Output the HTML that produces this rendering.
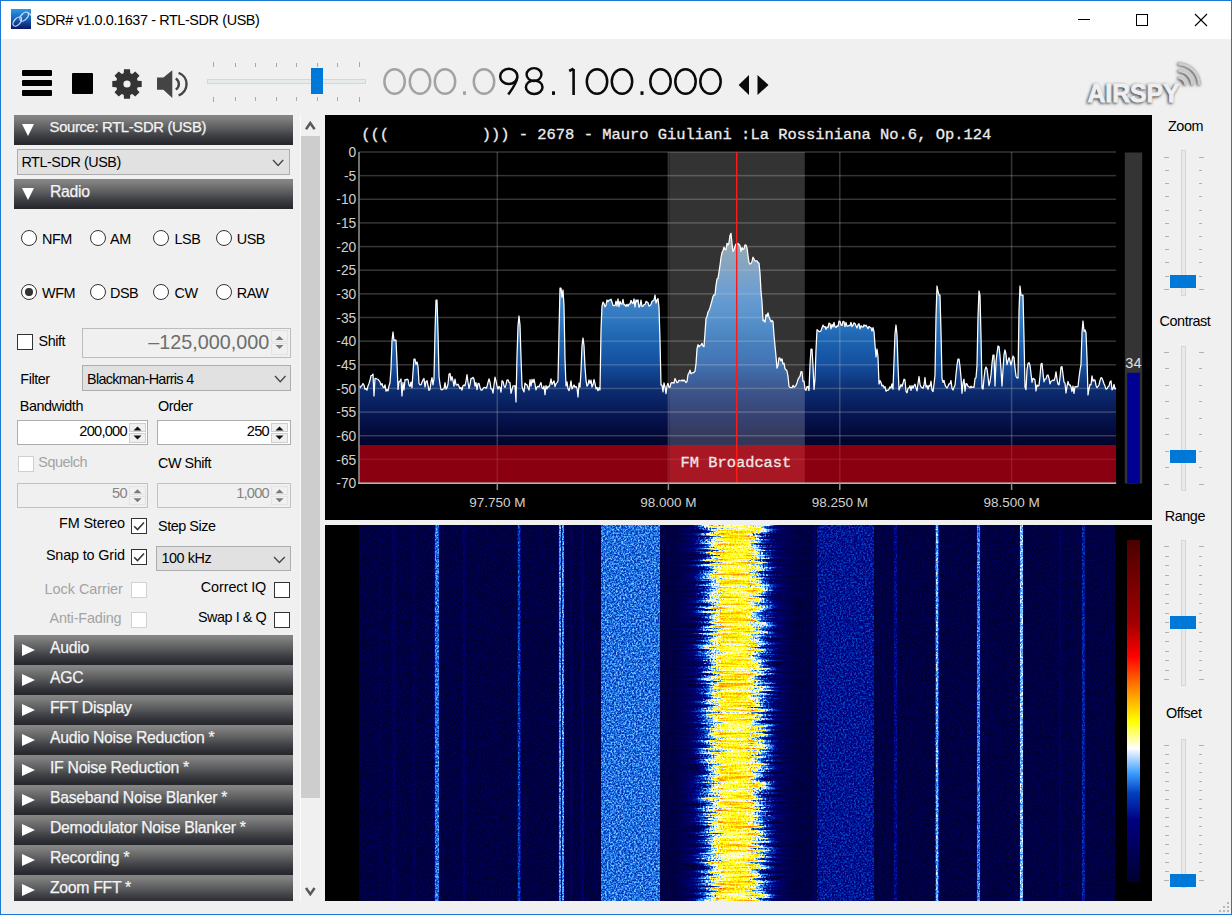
<!DOCTYPE html>
<html><head><meta charset="utf-8"><title>SDR#</title>
<style>
*{box-sizing:border-box;margin:0;padding:0}
html,body{width:1232px;height:915px;overflow:hidden;background:#f0f0f0;font-family:"Liberation Sans",sans-serif;color:#000}
.a{position:absolute}
.t{position:absolute;white-space:pre;font-size:13.7px;line-height:1;color:#000}
.hdr{position:absolute;left:14px;width:279px;height:30px;background:linear-gradient(#868686 0%,#7f7f7f 12%,#6b6b6c 30%,#57585b 48%,#45474b 62%,#35373c 78%,#2b2d32 90%,#252628 100%)}
.hdr .tx{position:absolute;left:36px;top:4.5px;font-size:15.8px;letter-spacing:-0.3px;line-height:1;color:#f4f4f4;white-space:pre;-webkit-text-stroke:0.25px #f4f4f4}
.tri-d{position:absolute;left:8px;top:9px;width:0;height:0;border-left:6.5px solid transparent;border-right:6.5px solid transparent;border-top:12px solid #fff}
.tri-r{position:absolute;left:8px;top:9px;width:0;height:0;border-top:6.5px solid transparent;border-bottom:6.5px solid transparent;border-left:13px solid #fff}
.radio{position:absolute;width:16px;height:16px;border-radius:50%;border:1.6px solid #333;background:#fff}
.chk{position:absolute;width:16px;height:16px;border:1.6px solid #333;background:#fff}
.chk.dis{border-color:#ccc}
.box{position:absolute;border:1px solid #adadad;background:#fff}
.combo{position:absolute;border:1px solid #adadad;background:#e1e1e1}
.spin{position:absolute;width:17px;background:#f0f0f0;border:1px solid #d6d6d6}
.dis{color:#a0a0a0}
</style></head><body>

<div class="a" style="left:0;top:0;width:1232px;height:915px;border:1px solid #1a7ad3"></div>
<div class="a" style="left:1px;top:1px;width:1230px;height:38px;background:#fff"></div>
<svg class="a" style="left:11px;top:9px" width="20" height="20" viewBox="0 0 20 20">
<defs><linearGradient id="ig" x1="0" y1="0" x2="0" y2="1"><stop offset="0" stop-color="#2a9ae8"/><stop offset="0.5" stop-color="#1560b8"/><stop offset="1" stop-color="#0a1565"/></linearGradient></defs>
<rect width="20" height="20" fill="url(#ig)"/>
<g fill="none" stroke="#e6eeff" stroke-width="1.3" opacity="0.85"><ellipse cx="6.3" cy="12.6" rx="5.4" ry="3.1" transform="rotate(-48 6.3 12.6)"/><ellipse cx="13.2" cy="7.6" rx="5.4" ry="3.1" transform="rotate(-48 13.2 7.6)"/><path d="M17 4.2 C18.5 4.5 19.5 5.5 20 6.5"/></g>
</svg>
<div class="t" style="left:36px;top:12.7px;font-size:14.4px;letter-spacing:-0.38px">SDR# v1.0.0.1637 - RTL-SDR (USB)</div>
<div class="a" style="left:1078px;top:19px;width:12px;height:1px;background:#000"></div>
<div class="a" style="left:1136px;top:14px;width:12px;height:12px;border:1px solid #000"></div>
<svg class="a" style="left:1194px;top:13px" width="14" height="14" viewBox="0 0 14 14"><path d="M1 1L13 13M13 1L1 13" stroke="#000" stroke-width="1.1"/></svg>
<div class="a" style="left:22px;top:70px;width:30px;height:6px;background:#000;border-radius:1px"></div>
<div class="a" style="left:22px;top:80px;width:30px;height:6px;background:#000;border-radius:1px"></div>
<div class="a" style="left:22px;top:90px;width:30px;height:6px;background:#000;border-radius:1px"></div>
<div class="a" style="left:72px;top:73px;width:21px;height:21px;background:#000;border-radius:1px"></div>
<svg class="a" style="left:0;top:0" width="200" height="110" viewBox="0 0 200 110">
<path d="M137.70,80.69 L141.70,81.02 L141.70,86.98 L137.70,87.31 L136.91,89.23 L139.50,92.29 L135.29,96.50 L132.23,93.91 L130.31,94.70 L129.98,98.70 L124.02,98.70 L123.69,94.70 L121.77,93.91 L118.71,96.50 L114.50,92.29 L117.09,89.23 L116.30,87.31 L112.30,86.98 L112.30,81.02 L116.30,80.69 L117.09,78.77 L114.50,75.71 L118.71,71.50 L121.77,74.09 L123.69,73.30 L124.02,69.30 L129.98,69.30 L130.31,73.30 L132.23,74.09 L135.29,71.50 L139.50,75.71 L136.91,78.77 Z M130.6,84 A3.6 3.6 0 1 0 123.4,84 A3.6 3.6 0 1 0 130.6,84 Z" fill="#333" fill-rule="evenodd"/>
<path d="M157 77.6 H163.4 L172.3 70.3 V97.9 L163.4 89.8 H157 Z" fill="#444"/>
<path d="M175.8 78.6 A6.5 6.5 0 0 1 175.8 89.6" fill="none" stroke="#444" stroke-width="2.4"/>
<path d="M178.6 72.8 A12 12 0 0 1 178.6 95.4" fill="none" stroke="#444" stroke-width="2.4"/>
</svg>
<div class="a" style="left:207px;top:79px;width:159px;height:5px;background:#e7eaea;border:1px solid #d6d6d6"></div>
<div class="a" style="left:213.4px;top:61.5px;width:1px;height:5px;background:#a8a8a8"></div>
<div class="a" style="left:213.4px;top:97px;width:1px;height:5px;background:#a8a8a8"></div>
<div class="a" style="left:234.5px;top:63px;width:1px;height:3.5px;background:#a8a8a8"></div>
<div class="a" style="left:234.5px;top:97px;width:1px;height:3.5px;background:#a8a8a8"></div>
<div class="a" style="left:254.7px;top:63px;width:1px;height:3.5px;background:#a8a8a8"></div>
<div class="a" style="left:254.7px;top:97px;width:1px;height:3.5px;background:#a8a8a8"></div>
<div class="a" style="left:275.8px;top:63px;width:1px;height:3.5px;background:#a8a8a8"></div>
<div class="a" style="left:275.8px;top:97px;width:1px;height:3.5px;background:#a8a8a8"></div>
<div class="a" style="left:295.9px;top:63px;width:1px;height:3.5px;background:#a8a8a8"></div>
<div class="a" style="left:295.9px;top:97px;width:1px;height:3.5px;background:#a8a8a8"></div>
<div class="a" style="left:317.3px;top:63px;width:1px;height:3.5px;background:#a8a8a8"></div>
<div class="a" style="left:317.3px;top:97px;width:1px;height:3.5px;background:#a8a8a8"></div>
<div class="a" style="left:337.1px;top:63px;width:1px;height:3.5px;background:#a8a8a8"></div>
<div class="a" style="left:337.1px;top:97px;width:1px;height:3.5px;background:#a8a8a8"></div>
<div class="a" style="left:358.8px;top:61.5px;width:1px;height:5px;background:#a8a8a8"></div>
<div class="a" style="left:358.8px;top:97px;width:1px;height:5px;background:#a8a8a8"></div>
<div class="a" style="left:311px;top:68px;width:12px;height:26px;background:#0078d7"></div>
<svg class="a" style="left:0;top:0" width="800" height="110" viewBox="0 0 800 110"><ellipse cx="394.6" cy="81.5" rx="10.2" ry="12.3" fill="none" stroke="#a3a3a3" stroke-width="2.5"/><ellipse cx="420" cy="81.5" rx="10.2" ry="12.3" fill="none" stroke="#a3a3a3" stroke-width="2.5"/><ellipse cx="445" cy="81.5" rx="10.2" ry="12.3" fill="none" stroke="#a3a3a3" stroke-width="2.5"/><rect x="463" y="91.3" width="3" height="3.6" fill="#a3a3a3"/><ellipse cx="484" cy="81.5" rx="10.2" ry="12.3" fill="none" stroke="#a3a3a3" stroke-width="2.5"/><ellipse cx="508.8" cy="76.4" rx="8.6" ry="7.6" fill="none" stroke="#0a0a0a" stroke-width="2.5"/><path d="M517.2 77.5 C516.8 83, 513 88, 508.3 94.5" fill="none" stroke="#0a0a0a" stroke-width="2.5"/><ellipse cx="534" cy="74.6" rx="7.4" ry="6.5" fill="none" stroke="#0a0a0a" stroke-width="2.4"/><ellipse cx="534.2" cy="87.2" rx="8.3" ry="6.8" fill="none" stroke="#0a0a0a" stroke-width="2.5"/><rect x="552" y="91.3" width="3" height="3.6" fill="#0a0a0a"/><path d="M573.6 69 V95.1 M569.2 71 L573.6 68.6" fill="none" stroke="#0a0a0a" stroke-width="2.6"/><ellipse cx="597" cy="81.5" rx="10.2" ry="12.3" fill="none" stroke="#0a0a0a" stroke-width="2.5"/><ellipse cx="622" cy="81.5" rx="10.2" ry="12.3" fill="none" stroke="#0a0a0a" stroke-width="2.5"/><rect x="640.5" y="91.3" width="3" height="3.6" fill="#0a0a0a"/><ellipse cx="660.5" cy="81.5" rx="10.2" ry="12.3" fill="none" stroke="#0a0a0a" stroke-width="2.5"/><ellipse cx="685.5" cy="81.5" rx="10.2" ry="12.3" fill="none" stroke="#0a0a0a" stroke-width="2.5"/><ellipse cx="710.5" cy="81.5" rx="10.2" ry="12.3" fill="none" stroke="#0a0a0a" stroke-width="2.5"/><path d="M749 75 V95 L738.6 85 Z" fill="#0a0a0a"/><path d="M757.5 75 V95 L768.5 85 Z" fill="#0a0a0a"/></svg>
<svg class="a" style="left:1070px;top:50px" width="150" height="65" viewBox="1070 50 150 65">
<defs><filter id="ash" x="1070" y="50" width="150" height="65" filterUnits="userSpaceOnUse"><feGaussianBlur stdDeviation="1.6"/></filter></defs>
<g filter="url(#ash)" fill="#3a3a3a" stroke="#3a3a3a">
<text x="1086.5" y="103" font-family="Liberation Sans" font-weight="700" font-size="26.5" stroke-width="1.2" textLength="92" lengthAdjust="spacingAndGlyphs">AIRSPY</text>
<path d="M1177.4 78.5 A7 7 0 0 1 1184.4 85.5 M1177.4 71.5 A14 14 0 0 1 1191.4 85.5 M1177.4 64.5 A21 21 0 0 1 1198.4 85.5" fill="none" stroke-width="3.2"/>
</g>
<text x="1087.5" y="101.6" font-family="Liberation Sans" font-weight="700" font-size="26.5" fill="#efefef" stroke="#efefef" stroke-width="0.9" textLength="92" lengthAdjust="spacingAndGlyphs">AIRSPY</text>
<path d="M1178.4 77.5 A7.3 7.3 0 0 1 1185.7 84.8 M1178.4 70.8 A14 14 0 0 1 1192.4 84.8 M1178.4 64 A20.8 20.8 0 0 1 1199.2 84.8" fill="none" stroke="#cdcdcd" stroke-width="2.8"/>
</svg>
<div class="a" style="left:0;top:0;width:300px;height:901px;overflow:hidden">
<div class="hdr" style="top:115px"><div class="tri-d" style="top:8.5px"></div><div class="tx" style="left:35.6px;top:5px;font-size:14.8px;letter-spacing:-0.33px">Source: RTL-SDR (USB)</div></div>
<div class="combo" style="left:17px;top:149px;width:273px;height:26px"></div>
<div class="t" style="left:21.4px;top:155.21px;font-size:14.4px;color:#000;letter-spacing:-0.45px;">RTL-SDR (USB)</div>
<svg class="a" style="left:271.3px;top:157.5px" width="14.199999999999989" height="9.5" viewBox="271.3 157.5 14.199999999999989 9.5"><path d="M273.3 159.5 L278.4 165 L283.5 159.5" fill="none" stroke="#444" stroke-width="1.3"/></svg>
<div class="hdr" style="top:179px"><div class="tri-d" style="top:8.5px"></div><div class="tx" style="top:4.5px">Radio</div></div>
<div class="radio" style="left:21px;top:230.3px"></div>
<div class="t" style="left:42.0px;top:232.01px;font-size:14.4px;color:#000;letter-spacing:-0.45px;">NFM</div>
<div class="radio" style="left:90px;top:230.3px"></div>
<div class="t" style="left:110.0px;top:232.01px;font-size:14.4px;color:#000;letter-spacing:-0.45px;">AM</div>
<div class="radio" style="left:153.4px;top:230.3px"></div>
<div class="t" style="left:174.5px;top:232.01px;font-size:14.4px;color:#000;letter-spacing:-0.45px;">LSB</div>
<div class="radio" style="left:216px;top:230.3px"></div>
<div class="t" style="left:236.7px;top:232.01px;font-size:14.4px;color:#000;letter-spacing:-0.45px;">USB</div>
<div class="radio" style="left:21px;top:284px"></div>
<div class="a" style="left:25.3px;top:288.3px;width:7.4px;height:7.4px;border-radius:50%;background:#333"></div>
<div class="t" style="left:42.0px;top:285.81px;font-size:14.4px;color:#000;letter-spacing:-0.45px;">WFM</div>
<div class="radio" style="left:90px;top:284px"></div>
<div class="t" style="left:110.0px;top:285.81px;font-size:14.4px;color:#000;letter-spacing:-0.45px;">DSB</div>
<div class="radio" style="left:153.4px;top:284px"></div>
<div class="t" style="left:174.5px;top:285.81px;font-size:14.4px;color:#000;letter-spacing:-0.45px;">CW</div>
<div class="radio" style="left:216px;top:284px"></div>
<div class="t" style="left:236.7px;top:285.81px;font-size:14.4px;color:#000;letter-spacing:-0.45px;">RAW</div>
<div class="chk" style="left:17px;top:334px"></div>
<div class="t" style="left:38.5px;top:334.21px;font-size:14.4px;color:#000;letter-spacing:-0.45px;">Shift</div>
<div class="box" style="left:82px;top:328px;width:209px;height:30px;background:#f0f0f0;border-color:#bcbcbc"></div>
<div class="a" style="left:271px;top:330px;width:17px;height:12.0px;background:#f0f0f0;border:1px solid #e3e3e3"></div><div class="a" style="left:271px;top:343.0px;width:17px;height:12.0px;background:#f0f0f0;border:1px solid #e3e3e3"></div><svg class="a" style="left:271px;top:330px" width="17" height="25" viewBox="271 330 17 25"><path d="M275.5 340.0 L279.5 336.0 L283.5 340.0 Z M275.5 345.0 L279.5 349.0 L283.5 345.0 Z" fill="#7a7a7a"/></svg>
<div class="t" style="right:30.8px;top:332.64px;font-size:19.8px;color:#6d6d6d;text-align:right;">&#8211;125,000,000</div>
<div class="t" style="left:20.3px;top:371.71px;font-size:14.4px;color:#000;letter-spacing:-0.45px;">Filter</div>
<div class="combo" style="left:82px;top:365px;width:209px;height:26px"></div>
<div class="t" style="left:87.0px;top:371.71px;font-size:14.4px;color:#000;letter-spacing:-0.45px;letter-spacing:-0.7px">Blackman-Harris 4</div>
<svg class="a" style="left:272.5px;top:373.8px" width="14.5" height="9.800000000000011" viewBox="272.5 373.8 14.5 9.800000000000011"><path d="M274.5 375.8 L279.75 381.6 L285 375.8" fill="none" stroke="#444" stroke-width="1.3"/></svg>
<div class="t" style="left:19.8px;top:399.21px;font-size:14.4px;color:#000;letter-spacing:-0.45px;">Bandwidth</div>
<div class="t" style="left:158.0px;top:399.21px;font-size:14.4px;color:#000;letter-spacing:-0.45px;">Order</div>
<div class="box" style="left:17px;top:420px;width:131px;height:25px"></div>
<div class="a" style="left:128.7px;top:422.5px;width:17px;height:9.5px;background:#f0f0f0;border:1px solid #cfcfcf"></div><div class="a" style="left:128.7px;top:433.0px;width:17px;height:9.5px;background:#f0f0f0;border:1px solid #cfcfcf"></div><svg class="a" style="left:128.7px;top:422.5px" width="17" height="20.0" viewBox="128.7 422.5 17 20.0"><path d="M133.2 430.0 L137.2 426.0 L141.2 430.0 Z M133.2 435.0 L137.2 439.0 L141.2 435.0 Z" fill="#111"/></svg>
<div class="t" style="right:173.2px;top:424.44px;font-size:14.6px;color:#000;text-align:right;letter-spacing:-0.75px;">200,000</div>
<div class="box" style="left:156.5px;top:420px;width:134px;height:25px"></div>
<div class="a" style="left:271.3px;top:422.5px;width:17px;height:9.5px;background:#f0f0f0;border:1px solid #cfcfcf"></div><div class="a" style="left:271.3px;top:433.0px;width:17px;height:9.5px;background:#f0f0f0;border:1px solid #cfcfcf"></div><svg class="a" style="left:271.3px;top:422.5px" width="17" height="20.0" viewBox="271.3 422.5 17 20.0"><path d="M275.8 430.0 L279.8 426.0 L283.8 430.0 Z M275.8 435.0 L279.8 439.0 L283.8 435.0 Z" fill="#111"/></svg>
<div class="t" style="right:31.1px;top:424.44px;font-size:14.6px;color:#000;text-align:right;letter-spacing:-0.75px;">250</div>
<div class="chk dis" style="left:17.5px;top:455.5px;border-color:#cfcfcf"></div>
<div class="t" style="left:38.3px;top:454.91px;font-size:14.4px;color:#a3a3a3;letter-spacing:-0.45px;">Squelch</div>
<div class="t" style="left:158.0px;top:456.21px;font-size:14.4px;color:#000;letter-spacing:-0.45px;">CW Shift</div>
<div class="box" style="left:17px;top:483px;width:131px;height:24.5px;background:#f0f0f0;border-color:#c2c2c2"></div>
<div class="a" style="left:128.7px;top:485.5px;width:17px;height:9.2px;background:#f0f0f0;border:1px solid #e3e3e3"></div><div class="a" style="left:128.7px;top:495.8px;width:17px;height:9.2px;background:#f0f0f0;border:1px solid #e3e3e3"></div><svg class="a" style="left:128.7px;top:485.5px" width="17" height="19.5" viewBox="128.7 485.5 17 19.5"><path d="M133.2 492.75 L137.2 488.75 L141.2 492.75 Z M133.2 497.75 L137.2 501.75 L141.2 497.75 Z" fill="#7a7a7a"/></svg>
<div class="t" style="right:173.2px;top:486.24px;font-size:14.6px;color:#838383;text-align:right;letter-spacing:-0.75px;">50</div>
<div class="box" style="left:156.5px;top:483px;width:134px;height:24.5px;background:#f0f0f0;border-color:#c2c2c2"></div>
<div class="a" style="left:271.3px;top:485.5px;width:17px;height:9.2px;background:#f0f0f0;border:1px solid #e3e3e3"></div><div class="a" style="left:271.3px;top:495.8px;width:17px;height:9.2px;background:#f0f0f0;border:1px solid #e3e3e3"></div><svg class="a" style="left:271.3px;top:485.5px" width="17" height="19.5" viewBox="271.3 485.5 17 19.5"><path d="M275.8 492.75 L279.8 488.75 L283.8 492.75 Z M275.8 497.75 L279.8 501.75 L283.8 497.75 Z" fill="#7a7a7a"/></svg>
<div class="t" style="right:31.1px;top:486.24px;font-size:14.6px;color:#838383;text-align:right;letter-spacing:-0.75px;">1,000</div>
<div class="t" style="right:175.1px;top:516.21px;font-size:14.4px;color:#000;text-align:right;letter-spacing:-0.45px;letter-spacing:-0.15px">FM Stereo</div>
<div class="chk" style="left:131.2px;top:518px"></div><svg class="a" style="left:131.2px;top:518px" width="16" height="16" viewBox="0 0 16 16"><path d="M3.2 8.2 L6.5 11.6 L13 4.6" fill="none" stroke="#333" stroke-width="1.5"/></svg>
<div class="t" style="left:158.0px;top:519.11px;font-size:14.4px;color:#000;letter-spacing:-0.45px;">Step Size</div>
<div class="t" style="right:175.1px;top:547.51px;font-size:14.4px;color:#000;text-align:right;letter-spacing:-0.45px;letter-spacing:-0.15px">Snap to Grid</div>
<div class="chk" style="left:131.2px;top:549.3px"></div><svg class="a" style="left:131.2px;top:549.3px" width="16" height="16" viewBox="0 0 16 16"><path d="M3.2 8.2 L6.5 11.6 L13 4.6" fill="none" stroke="#333" stroke-width="1.5"/></svg>
<div class="combo" style="left:156.4px;top:545.5px;width:134.2px;height:25.5px"></div>
<div class="t" style="left:161.5px;top:551.31px;font-size:14.4px;color:#000;letter-spacing:-0.45px;">100 kHz</div>
<svg class="a" style="left:272.2px;top:554.5px" width="14.800000000000011" height="9.5" viewBox="272.2 554.5 14.800000000000011 9.5"><path d="M274.2 556.5 L279.6 562 L285 556.5" fill="none" stroke="#444" stroke-width="1.3"/></svg>
<div class="t" style="right:177.1px;top:581.61px;font-size:14.4px;color:#a3a3a3;text-align:right;letter-spacing:-0.45px;letter-spacing:0px">Lock Carrier</div>
<div class="chk" style="left:131.2px;top:581.7px;border-color:#d2d2d2"></div>
<div class="t" style="right:33.8px;top:580.01px;font-size:14.4px;color:#000;text-align:right;letter-spacing:-0.45px;letter-spacing:-0.1px">Correct IQ</div>
<div class="chk" style="left:273.8px;top:581.7px"></div>
<div class="t" style="right:178.6px;top:611.41px;font-size:14.4px;color:#a3a3a3;text-align:right;letter-spacing:-0.45px;letter-spacing:-0.15px">Anti-Fading</div>
<div class="chk" style="left:131.2px;top:611.8px;border-color:#d2d2d2"></div>
<div class="t" style="right:33.8px;top:610.41px;font-size:14.4px;color:#000;text-align:right;letter-spacing:-0.45px;">Swap I &amp; Q</div>
<div class="chk" style="left:273.8px;top:611.5px"></div>
<div class="hdr" style="top:635px"><div class="tri-r" style="top:8.8px"></div><div class="tx">Audio</div></div>
<div class="hdr" style="top:665px"><div class="tri-r" style="top:8.8px"></div><div class="tx">AGC</div></div>
<div class="hdr" style="top:695px"><div class="tri-r" style="top:8.8px"></div><div class="tx">FFT Display</div></div>
<div class="hdr" style="top:725px"><div class="tri-r" style="top:8.8px"></div><div class="tx">Audio Noise Reduction *</div></div>
<div class="hdr" style="top:755px"><div class="tri-r" style="top:8.8px"></div><div class="tx">IF Noise Reduction *</div></div>
<div class="hdr" style="top:785px"><div class="tri-r" style="top:8.8px"></div><div class="tx">Baseband Noise Blanker *</div></div>
<div class="hdr" style="top:815px"><div class="tri-r" style="top:8.8px"></div><div class="tx">Demodulator Noise Blanker *</div></div>
<div class="hdr" style="top:845px"><div class="tri-r" style="top:8.8px"></div><div class="tx">Recording *</div></div>
<div class="hdr" style="top:875px"><div class="tri-r" style="top:8.8px"></div><div class="tx">Zoom FFT *</div></div>
</div>
<div class="a" style="left:300px;top:115px;width:1px;height:786px;background:#fbfbfb"></div>
<div class="a" style="left:301px;top:136.4px;width:19px;height:661.3px;background:#cdcdcd"></div>
<svg class="a" style="left:304.2px;top:121.4px" width="12.600000000000023" height="10.199999999999989" viewBox="304.2 121.4 12.600000000000023 10.199999999999989"><path d="M306.2 129.6 L310.5 123.4 L314.8 129.6" fill="none" stroke="#5a5a5a" stroke-width="2.5"/></svg>
<svg class="a" style="left:304.2px;top:886.2px" width="12.600000000000023" height="10.199999999999932" viewBox="304.2 886.2 12.600000000000023 10.199999999999932"><path d="M306.2 888.2 L310.5 894.4 L314.8 888.2" fill="none" stroke="#5a5a5a" stroke-width="2.5"/></svg>
<svg class="a" style="left:325px;top:115px" width="827" height="405" viewBox="325 115 827 405">
<defs>
<linearGradient id="fg" gradientUnits="userSpaceOnUse" x1="0" y1="152" x2="0" y2="483">
<stop offset="0" stop-color="#b8c4cc"/>
<stop offset="0.30" stop-color="#7492a6"/>
<stop offset="0.42" stop-color="#4a88c8"/>
<stop offset="0.50" stop-color="#3078c0"/>
<stop offset="0.568" stop-color="#1c64b0"/>
<stop offset="0.64" stop-color="#1450a0"/>
<stop offset="0.72" stop-color="#0c2c70"/>
<stop offset="0.80" stop-color="#061450"/>
<stop offset="0.87" stop-color="#020630"/>
<stop offset="1" stop-color="#000010"/>
</linearGradient></defs>
<rect x="325" y="115" width="827" height="405" fill="#000"/>
<path d="M359,483 L359,385.9 L360,387.8 L361,386.2 L362,385.5 L363,383.5 L364,385.0 L365,389.3 L366,388.6 L367,390.2 L368,385.9 L369,383.4 L370,380.3 L371,375.7 L372,375.5 L373,374.0 L374,396.0 L375,378.4 L376,378.6 L377,379.0 L378,379.3 L379,380.6 L380,381.9 L381,385.0 L382,383.6 L383,387.0 L384,387.8 L385,384.9 L386,391.1 L387,389.5 L388,390.9 L389,386.0 L390,382.8 L391,368.8 L392,340.7 L393,332.0 L394,340.8 L395,340.0 L396,340.0 L397,362.1 L398,389.4 L399,382.0 L400,380.8 L401,379.0 L402,396.0 L403,382.5 L404,390.0 L405,379.6 L406,379.9 L407,379.2 L408,379.6 L409,385.1 L410,386.5 L411,382.2 L412,387.6 L413,371.7 L414,359.0 L415,359.0 L416,364.5 L417,362.0 L418,366.3 L419,383.5 L420,384.9 L421,384.7 L422,382.2 L423,379.8 L424,378.5 L425,386.9 L426,381.4 L427,380.7 L428,385.5 L429,390.4 L430,389.4 L431,381.8 L432,377.7 L433,384.9 L434,378.7 L435,331.4 L436,300.0 L437,300.0 L438,332.0 L439,376.6 L440,384.1 L441,389.7 L442,389.9 L443,389.0 L444,388.9 L445,382.6 L446,389.1 L447,387.7 L448,384.3 L449,374.2 L450,373.4 L451,380.7 L452,376.7 L453,380.7 L454,386.1 L455,379.2 L456,384.7 L457,385.1 L458,384.1 L459,386.2 L460,388.7 L461,387.5 L462,390.2 L463,385.7 L464,385.0 L465,385.9 L466,381.0 L467,374.6 L468,382.2 L469,388.3 L470,384.6 L471,378.3 L472,378.7 L473,377.3 L474,379.1 L475,386.1 L476,382.5 L477,389.6 L478,383.7 L479,383.4 L480,387.4 L481,390.1 L482,390.1 L483,388.6 L484,387.5 L485,387.3 L486,388.4 L487,386.6 L488,382.5 L489,378.8 L490,382.2 L491,388.9 L492,388.9 L493,393.1 L494,385.0 L495,377.2 L496,380.8 L497,386.1 L498,389.1 L499,386.3 L500,387.6 L501,392.2 L502,380.7 L503,381.4 L504,385.7 L505,387.4 L506,384.7 L507,380.0 L508,379.8 L509,382.3 L510,382.6 L511,393.3 L512,389.6 L513,385.8 L514,386.0 L515,385.7 L516,402.0 L517,356.3 L518,325.9 L519,316.0 L520,325.1 L521,357.1 L522,386.1 L523,389.8 L524,391.9 L525,383.1 L526,384.4 L527,384.9 L528,387.8 L529,390.1 L530,379.7 L531,386.1 L532,379.4 L533,382.5 L534,379.2 L535,384.2 L536,389.8 L537,387.0 L538,386.2 L539,387.0 L540,384.6 L541,382.5 L542,388.0 L543,388.9 L544,386.0 L545,394.7 L546,385.6 L547,388.9 L548,386.4 L549,386.9 L550,384.2 L551,378.9 L552,384.3 L553,382.7 L554,380.9 L555,386.6 L556,383.7 L557,382.6 L558,381.0 L559,331.7 L560,288.0 L561,288.0 L562,297.1 L563,290.0 L564,306.1 L565,359.2 L566,386.1 L567,381.8 L568,388.9 L569,390.7 L570,387.2 L571,380.9 L572,389.0 L573,387.0 L574,384.9 L575,387.2 L576,386.4 L577,388.2 L578,397.0 L579,383.2 L580,387.1 L581,371.1 L582,345.5 L583,338.0 L584,345.5 L585,367.0 L586,380.1 L587,386.2 L588,384.7 L589,379.9 L590,383.4 L591,380.1 L592,387.0 L593,384.8 L594,379.5 L595,383.3 L596,388.8 L597,387.4 L598,390.7 L599,387.6 L600,389.9 L601,330.0 L602,305.8 L603,302.1 L604,303.7 L605,306.8 L606,305.1 L607,300.0 L608,301.6 L609,300.0 L610,300.0 L611,299.1 L612,302.0 L613,305.3 L614,305.6 L615,305.7 L616,301.2 L617,306.0 L618,298.9 L619,306.7 L620,301.3 L621,304.0 L622,304.2 L623,299.3 L624,304.9 L625,304.7 L626,306.5 L627,304.3 L628,306.2 L629,304.1 L630,304.0 L631,300.3 L632,302.8 L633,303.6 L634,298.9 L635,306.9 L636,299.9 L637,301.7 L638,299.8 L639,307.2 L640,305.8 L641,300.2 L642,306.5 L643,306.1 L644,304.6 L645,304.5 L646,301.4 L647,302.0 L648,302.6 L649,306.1 L650,305.5 L651,304.3 L652,301.3 L653,300.7 L654,300.0 L655,295.0 L656,303.0 L657,300.1 L658,298.5 L659,307.4 L660,340.0 L661,385.1 L662,385.2 L663,391.8 L664,382.9 L665,386.8 L666,393.7 L667,385.9 L668,383.3 L669,387.3 L670,387.1 L671,383.1 L672,382.7 L673,382.8 L674,383.2 L675,378.5 L676,380.5 L677,382.7 L678,382.3 L679,380.4 L680,380.7 L681,380.9 L682,379.9 L683,381.2 L684,380.0 L685,381.2 L686,382.5 L687,381.6 L688,374.7 L689,373.1 L690,370.2 L691,373.8 L692,372.9 L693,372.9 L694,372.3 L695,371.0 L696,363.9 L697,349.0 L698,344.7 L699,346.8 L700,345.5 L701,345.2 L702,343.3 L703,345.9 L704,346.7 L705,333.1 L706,318.6 L707,316.5 L708,312.0 L709,310.5 L710,307.7 L711,304.1 L712,300.5 L713,296.5 L714,294.9 L715,294.8 L716,285.3 L717,279.0 L718,278.3 L719,272.2 L720,265.3 L721,257.6 L722,252.7 L723,250.5 L724,247.2 L725,249.6 L726,249.7 L727,243.3 L728,244.9 L729,242.4 L730,235.5 L731,233.3 L732,243.8 L733,251.3 L734,249.8 L735,246.4 L736,244.0 L737,244.0 L738,243.4 L739,244.5 L740,245.5 L741,251.3 L742,247.6 L743,249.6 L744,248.8 L745,244.9 L746,245.1 L747,247.9 L748,255.7 L749,262.7 L750,264.0 L751,263.6 L752,261.4 L753,257.2 L754,258.9 L755,261.1 L756,260.9 L757,260.8 L758,262.6 L759,263.0 L760,273.2 L761,291.4 L762,301.8 L763,320.6 L764,320.2 L765,322.1 L766,314.6 L767,316.4 L768,312.8 L769,316.9 L770,319.1 L771,321.8 L772,320.3 L773,321.6 L774,335.4 L775,346.0 L776,356.4 L777,368.1 L778,365.2 L779,357.8 L780,358.4 L781,360.9 L782,358.8 L783,364.0 L784,363.2 L785,368.8 L786,369.7 L787,371.2 L788,376.4 L789,386.3 L790,387.4 L791,387.5 L792,387.7 L793,385.4 L794,387.2 L795,386.5 L796,385.3 L797,382.9 L798,379.5 L799,377.6 L800,376.3 L801,371.6 L802,371.9 L803,381.5 L804,381.2 L805,389.1 L806,390.4 L807,386.7 L808,386.5 L809,390.5 L810,364.7 L811,349.0 L812,349.0 L813,365.5 L814,389.4 L815,379.1 L816,350.0 L817,329.6 L818,330.5 L819,331.6 L820,331.4 L821,330.9 L822,327.7 L823,325.1 L824,326.8 L825,326.5 L826,329.3 L827,326.9 L828,327.7 L829,323.2 L830,323.5 L831,328.8 L832,324.3 L833,327.0 L834,322.3 L835,326.8 L836,327.6 L837,325.8 L838,326.5 L839,321.1 L840,321.3 L841,325.0 L842,325.5 L843,321.3 L844,321.5 L845,326.7 L846,322.5 L847,326.2 L848,326.1 L849,325.4 L850,325.7 L851,322.3 L852,326.6 L853,325.2 L854,322.8 L855,323.5 L856,325.7 L857,327.9 L858,324.9 L859,323.7 L860,328.9 L861,325.7 L862,326.8 L863,327.2 L864,324.8 L865,326.0 L866,325.1 L867,326.8 L868,328.7 L869,326.5 L870,327.2 L871,327.8 L872,331.1 L873,327.7 L874,331.6 L875,345.0 L876,356.9 L877,349.0 L878,356.9 L879,384.0 L880,380.6 L881,382.5 L882,386.0 L883,385.1 L884,387.8 L885,386.6 L886,391.2 L887,390.2 L888,390.4 L889,389.2 L890,386.8 L891,388.1 L892,383.8 L893,389.2 L894,361.3 L895,333.6 L896,325.0 L897,334.7 L898,365.0 L899,390.0 L900,387.6 L901,384.5 L902,386.6 L903,383.3 L904,379.1 L905,380.0 L906,391.2 L907,392.8 L908,388.4 L909,387.9 L910,385.7 L911,390.4 L912,385.6 L913,388.2 L914,385.6 L915,384.2 L916,387.9 L917,390.8 L918,383.6 L919,376.5 L920,384.2 L921,386.9 L922,387.5 L923,388.3 L924,385.3 L925,377.5 L926,387.2 L927,385.5 L928,389.4 L929,385.5 L930,386.1 L931,381.2 L932,390.2 L933,391.6 L934,384.5 L935,375.0 L936,316.6 L937,286.0 L938,291.3 L939,295.0 L940,295.0 L941,331.7 L942,378.4 L943,382.4 L944,380.4 L945,384.9 L946,386.9 L947,388.0 L948,386.3 L949,383.8 L950,383.9 L951,380.5 L952,388.4 L953,390.0 L954,387.2 L955,385.3 L956,374.5 L957,365.0 L958,359.0 L959,359.0 L960,366.3 L961,377.3 L962,393.3 L963,382.8 L964,379.2 L965,391.1 L966,383.5 L967,384.1 L968,386.3 L969,386.9 L970,387.8 L971,386.2 L972,387.5 L973,387.0 L974,387.4 L975,378.6 L976,377.8 L977,365.6 L978,316.8 L979,291.0 L980,295.5 L981,336.3 L982,387.8 L983,389.1 L984,378.5 L985,369.8 L986,367.0 L987,369.0 L988,376.9 L989,385.6 L990,381.6 L991,375.0 L992,363.4 L993,355.0 L994,355.0 L995,386.0 L996,361.9 L997,353.3 L998,346.0 L999,346.5 L1000,355.9 L1001,369.4 L1002,386.0 L1003,369.6 L1004,354.7 L1005,350.0 L1006,354.5 L1007,364.6 L1008,360.9 L1009,357.7 L1010,361.0 L1011,365.0 L1012,361.0 L1013,356.0 L1014,357.5 L1015,368.1 L1016,376.2 L1017,377.9 L1018,378.0 L1019,310.6 L1020,286.0 L1021,295.2 L1022,295.0 L1023,295.0 L1024,337.8 L1025,387.1 L1026,389.7 L1027,369.5 L1028,363.5 L1029,362.6 L1030,365.3 L1031,373.6 L1032,382.3 L1033,378.4 L1034,378.9 L1035,380.0 L1036,391.0 L1037,384.9 L1038,386.2 L1039,385.4 L1040,376.1 L1041,364.0 L1042,363.4 L1043,373.1 L1044,381.8 L1045,379.0 L1046,378.8 L1047,375.3 L1048,375.0 L1049,378.2 L1050,383.9 L1051,381.2 L1052,380.7 L1053,380.0 L1054,380.6 L1055,378.0 L1056,371.9 L1057,379.3 L1058,384.1 L1059,384.9 L1060,377.5 L1061,367.1 L1062,366.7 L1063,374.5 L1064,382.1 L1065,383.2 L1066,393.0 L1067,386.1 L1068,381.5 L1069,384.8 L1070,384.9 L1071,386.9 L1072,391.5 L1073,386.0 L1074,393.3 L1075,386.6 L1076,386.6 L1077,387.0 L1078,386.5 L1079,377.5 L1080,370.1 L1081,364.3 L1082,332.4 L1083,321.0 L1084,331.3 L1085,330.0 L1086,332.8 L1087,358.0 L1088,395.0 L1089,389.0 L1090,384.5 L1091,384.8 L1092,375.9 L1093,381.2 L1094,379.8 L1095,380.2 L1096,385.4 L1097,387.7 L1098,386.4 L1099,385.0 L1100,380.5 L1101,377.6 L1102,378.3 L1103,380.7 L1104,383.7 L1105,386.1 L1106,389.1 L1107,388.7 L1108,386.7 L1109,386.1 L1110,381.9 L1111,380.8 L1112,389.8 L1113,388.9 L1114,384.4 L1115,389.0 L1116,388.3 L1116,483 Z" fill="url(#fg)"/>
<rect x="359" y="151.25" width="757" height="1.5" fill="rgba(190,190,190,0.28)"/>
<rect x="359" y="174.89" width="757" height="1.5" fill="rgba(190,190,190,0.28)"/>
<rect x="359" y="198.54" width="757" height="1.5" fill="rgba(190,190,190,0.28)"/>
<rect x="359" y="222.18" width="757" height="1.5" fill="rgba(190,190,190,0.28)"/>
<rect x="359" y="245.82" width="757" height="1.5" fill="rgba(190,190,190,0.28)"/>
<rect x="359" y="269.46" width="757" height="1.5" fill="rgba(190,190,190,0.28)"/>
<rect x="359" y="293.11" width="757" height="1.5" fill="rgba(190,190,190,0.28)"/>
<rect x="359" y="316.75" width="757" height="1.5" fill="rgba(190,190,190,0.28)"/>
<rect x="359" y="340.39" width="757" height="1.5" fill="rgba(190,190,190,0.28)"/>
<rect x="359" y="364.04" width="757" height="1.5" fill="rgba(190,190,190,0.28)"/>
<rect x="359" y="387.68" width="757" height="1.5" fill="rgba(190,190,190,0.28)"/>
<rect x="359" y="411.32" width="757" height="1.5" fill="rgba(190,190,190,0.28)"/>
<rect x="359" y="434.96" width="757" height="1.5" fill="rgba(190,190,190,0.28)"/>
<rect x="359" y="458.61" width="757" height="1.5" fill="rgba(190,190,190,0.28)"/>
<rect x="359" y="482.25" width="757" height="1.5" fill="rgba(190,190,190,0.28)"/>
<rect x="496.55" y="152" width="1.5" height="331" fill="rgba(190,190,190,0.28)"/>
<rect x="667.65" y="152" width="1.5" height="331" fill="rgba(190,190,190,0.28)"/>
<rect x="839.05" y="152" width="1.5" height="331" fill="rgba(190,190,190,0.28)"/>
<rect x="1010.85" y="152" width="1.5" height="331" fill="rgba(190,190,190,0.28)"/>
<rect x="669.4" y="152" width="135.4" height="331" fill="rgba(255,255,255,0.2)"/>
<polyline points="359,385.9 360,387.8 361,386.2 362,385.5 363,383.5 364,385.0 365,389.3 366,388.6 367,390.2 368,385.9 369,383.4 370,380.3 371,375.7 372,375.5 373,374.0 374,396.0 375,378.4 376,378.6 377,379.0 378,379.3 379,380.6 380,381.9 381,385.0 382,383.6 383,387.0 384,387.8 385,384.9 386,391.1 387,389.5 388,390.9 389,386.0 390,382.8 391,368.8 392,340.7 393,332.0 394,340.8 395,340.0 396,340.0 397,362.1 398,389.4 399,382.0 400,380.8 401,379.0 402,396.0 403,382.5 404,390.0 405,379.6 406,379.9 407,379.2 408,379.6 409,385.1 410,386.5 411,382.2 412,387.6 413,371.7 414,359.0 415,359.0 416,364.5 417,362.0 418,366.3 419,383.5 420,384.9 421,384.7 422,382.2 423,379.8 424,378.5 425,386.9 426,381.4 427,380.7 428,385.5 429,390.4 430,389.4 431,381.8 432,377.7 433,384.9 434,378.7 435,331.4 436,300.0 437,300.0 438,332.0 439,376.6 440,384.1 441,389.7 442,389.9 443,389.0 444,388.9 445,382.6 446,389.1 447,387.7 448,384.3 449,374.2 450,373.4 451,380.7 452,376.7 453,380.7 454,386.1 455,379.2 456,384.7 457,385.1 458,384.1 459,386.2 460,388.7 461,387.5 462,390.2 463,385.7 464,385.0 465,385.9 466,381.0 467,374.6 468,382.2 469,388.3 470,384.6 471,378.3 472,378.7 473,377.3 474,379.1 475,386.1 476,382.5 477,389.6 478,383.7 479,383.4 480,387.4 481,390.1 482,390.1 483,388.6 484,387.5 485,387.3 486,388.4 487,386.6 488,382.5 489,378.8 490,382.2 491,388.9 492,388.9 493,393.1 494,385.0 495,377.2 496,380.8 497,386.1 498,389.1 499,386.3 500,387.6 501,392.2 502,380.7 503,381.4 504,385.7 505,387.4 506,384.7 507,380.0 508,379.8 509,382.3 510,382.6 511,393.3 512,389.6 513,385.8 514,386.0 515,385.7 516,402.0 517,356.3 518,325.9 519,316.0 520,325.1 521,357.1 522,386.1 523,389.8 524,391.9 525,383.1 526,384.4 527,384.9 528,387.8 529,390.1 530,379.7 531,386.1 532,379.4 533,382.5 534,379.2 535,384.2 536,389.8 537,387.0 538,386.2 539,387.0 540,384.6 541,382.5 542,388.0 543,388.9 544,386.0 545,394.7 546,385.6 547,388.9 548,386.4 549,386.9 550,384.2 551,378.9 552,384.3 553,382.7 554,380.9 555,386.6 556,383.7 557,382.6 558,381.0 559,331.7 560,288.0 561,288.0 562,297.1 563,290.0 564,306.1 565,359.2 566,386.1 567,381.8 568,388.9 569,390.7 570,387.2 571,380.9 572,389.0 573,387.0 574,384.9 575,387.2 576,386.4 577,388.2 578,397.0 579,383.2 580,387.1 581,371.1 582,345.5 583,338.0 584,345.5 585,367.0 586,380.1 587,386.2 588,384.7 589,379.9 590,383.4 591,380.1 592,387.0 593,384.8 594,379.5 595,383.3 596,388.8 597,387.4 598,390.7 599,387.6 600,389.9 601,330.0 602,305.8 603,302.1 604,303.7 605,306.8 606,305.1 607,300.0 608,301.6 609,300.0 610,300.0 611,299.1 612,302.0 613,305.3 614,305.6 615,305.7 616,301.2 617,306.0 618,298.9 619,306.7 620,301.3 621,304.0 622,304.2 623,299.3 624,304.9 625,304.7 626,306.5 627,304.3 628,306.2 629,304.1 630,304.0 631,300.3 632,302.8 633,303.6 634,298.9 635,306.9 636,299.9 637,301.7 638,299.8 639,307.2 640,305.8 641,300.2 642,306.5 643,306.1 644,304.6 645,304.5 646,301.4 647,302.0 648,302.6 649,306.1 650,305.5 651,304.3 652,301.3 653,300.7 654,300.0 655,295.0 656,303.0 657,300.1 658,298.5 659,307.4 660,340.0 661,385.1 662,385.2 663,391.8 664,382.9 665,386.8 666,393.7 667,385.9 668,383.3 669,387.3 670,387.1 671,383.1 672,382.7 673,382.8 674,383.2 675,378.5 676,380.5 677,382.7 678,382.3 679,380.4 680,380.7 681,380.9 682,379.9 683,381.2 684,380.0 685,381.2 686,382.5 687,381.6 688,374.7 689,373.1 690,370.2 691,373.8 692,372.9 693,372.9 694,372.3 695,371.0 696,363.9 697,349.0 698,344.7 699,346.8 700,345.5 701,345.2 702,343.3 703,345.9 704,346.7 705,333.1 706,318.6 707,316.5 708,312.0 709,310.5 710,307.7 711,304.1 712,300.5 713,296.5 714,294.9 715,294.8 716,285.3 717,279.0 718,278.3 719,272.2 720,265.3 721,257.6 722,252.7 723,250.5 724,247.2 725,249.6 726,249.7 727,243.3 728,244.9 729,242.4 730,235.5 731,233.3 732,243.8 733,251.3 734,249.8 735,246.4 736,244.0 737,244.0 738,243.4 739,244.5 740,245.5 741,251.3 742,247.6 743,249.6 744,248.8 745,244.9 746,245.1 747,247.9 748,255.7 749,262.7 750,264.0 751,263.6 752,261.4 753,257.2 754,258.9 755,261.1 756,260.9 757,260.8 758,262.6 759,263.0 760,273.2 761,291.4 762,301.8 763,320.6 764,320.2 765,322.1 766,314.6 767,316.4 768,312.8 769,316.9 770,319.1 771,321.8 772,320.3 773,321.6 774,335.4 775,346.0 776,356.4 777,368.1 778,365.2 779,357.8 780,358.4 781,360.9 782,358.8 783,364.0 784,363.2 785,368.8 786,369.7 787,371.2 788,376.4 789,386.3 790,387.4 791,387.5 792,387.7 793,385.4 794,387.2 795,386.5 796,385.3 797,382.9 798,379.5 799,377.6 800,376.3 801,371.6 802,371.9 803,381.5 804,381.2 805,389.1 806,390.4 807,386.7 808,386.5 809,390.5 810,364.7 811,349.0 812,349.0 813,365.5 814,389.4 815,379.1 816,350.0 817,329.6 818,330.5 819,331.6 820,331.4 821,330.9 822,327.7 823,325.1 824,326.8 825,326.5 826,329.3 827,326.9 828,327.7 829,323.2 830,323.5 831,328.8 832,324.3 833,327.0 834,322.3 835,326.8 836,327.6 837,325.8 838,326.5 839,321.1 840,321.3 841,325.0 842,325.5 843,321.3 844,321.5 845,326.7 846,322.5 847,326.2 848,326.1 849,325.4 850,325.7 851,322.3 852,326.6 853,325.2 854,322.8 855,323.5 856,325.7 857,327.9 858,324.9 859,323.7 860,328.9 861,325.7 862,326.8 863,327.2 864,324.8 865,326.0 866,325.1 867,326.8 868,328.7 869,326.5 870,327.2 871,327.8 872,331.1 873,327.7 874,331.6 875,345.0 876,356.9 877,349.0 878,356.9 879,384.0 880,380.6 881,382.5 882,386.0 883,385.1 884,387.8 885,386.6 886,391.2 887,390.2 888,390.4 889,389.2 890,386.8 891,388.1 892,383.8 893,389.2 894,361.3 895,333.6 896,325.0 897,334.7 898,365.0 899,390.0 900,387.6 901,384.5 902,386.6 903,383.3 904,379.1 905,380.0 906,391.2 907,392.8 908,388.4 909,387.9 910,385.7 911,390.4 912,385.6 913,388.2 914,385.6 915,384.2 916,387.9 917,390.8 918,383.6 919,376.5 920,384.2 921,386.9 922,387.5 923,388.3 924,385.3 925,377.5 926,387.2 927,385.5 928,389.4 929,385.5 930,386.1 931,381.2 932,390.2 933,391.6 934,384.5 935,375.0 936,316.6 937,286.0 938,291.3 939,295.0 940,295.0 941,331.7 942,378.4 943,382.4 944,380.4 945,384.9 946,386.9 947,388.0 948,386.3 949,383.8 950,383.9 951,380.5 952,388.4 953,390.0 954,387.2 955,385.3 956,374.5 957,365.0 958,359.0 959,359.0 960,366.3 961,377.3 962,393.3 963,382.8 964,379.2 965,391.1 966,383.5 967,384.1 968,386.3 969,386.9 970,387.8 971,386.2 972,387.5 973,387.0 974,387.4 975,378.6 976,377.8 977,365.6 978,316.8 979,291.0 980,295.5 981,336.3 982,387.8 983,389.1 984,378.5 985,369.8 986,367.0 987,369.0 988,376.9 989,385.6 990,381.6 991,375.0 992,363.4 993,355.0 994,355.0 995,386.0 996,361.9 997,353.3 998,346.0 999,346.5 1000,355.9 1001,369.4 1002,386.0 1003,369.6 1004,354.7 1005,350.0 1006,354.5 1007,364.6 1008,360.9 1009,357.7 1010,361.0 1011,365.0 1012,361.0 1013,356.0 1014,357.5 1015,368.1 1016,376.2 1017,377.9 1018,378.0 1019,310.6 1020,286.0 1021,295.2 1022,295.0 1023,295.0 1024,337.8 1025,387.1 1026,389.7 1027,369.5 1028,363.5 1029,362.6 1030,365.3 1031,373.6 1032,382.3 1033,378.4 1034,378.9 1035,380.0 1036,391.0 1037,384.9 1038,386.2 1039,385.4 1040,376.1 1041,364.0 1042,363.4 1043,373.1 1044,381.8 1045,379.0 1046,378.8 1047,375.3 1048,375.0 1049,378.2 1050,383.9 1051,381.2 1052,380.7 1053,380.0 1054,380.6 1055,378.0 1056,371.9 1057,379.3 1058,384.1 1059,384.9 1060,377.5 1061,367.1 1062,366.7 1063,374.5 1064,382.1 1065,383.2 1066,393.0 1067,386.1 1068,381.5 1069,384.8 1070,384.9 1071,386.9 1072,391.5 1073,386.0 1074,393.3 1075,386.6 1076,386.6 1077,387.0 1078,386.5 1079,377.5 1080,370.1 1081,364.3 1082,332.4 1083,321.0 1084,331.3 1085,330.0 1086,332.8 1087,358.0 1088,395.0 1089,389.0 1090,384.5 1091,384.8 1092,375.9 1093,381.2 1094,379.8 1095,380.2 1096,385.4 1097,387.7 1098,386.4 1099,385.0 1100,380.5 1101,377.6 1102,378.3 1103,380.7 1104,383.7 1105,386.1 1106,389.1 1107,388.7 1108,386.7 1109,386.1 1110,381.9 1111,380.8 1112,389.8 1113,388.9 1114,384.4 1115,389.0 1116,388.3" fill="none" stroke="#fff" stroke-width="1.25" stroke-linejoin="round"/>
<rect x="359" y="445" width="757" height="38" fill="#8a0010"/>
<rect x="669.4" y="445" width="135.4" height="38" fill="#a81824"/>
<rect x="359" y="458.61" width="757" height="1.5" fill="rgba(255,255,255,0.08)"/>
<rect x="496.55" y="445" width="1.5" height="38" fill="rgba(255,255,255,0.1)"/>
<rect x="667.65" y="445" width="1.5" height="38" fill="rgba(255,255,255,0.1)"/>
<rect x="839.05" y="445" width="1.5" height="38" fill="rgba(255,255,255,0.1)"/>
<rect x="1010.85" y="445" width="1.5" height="38" fill="rgba(255,255,255,0.1)"/>
<text x="680.5" y="466.6" font-family="Liberation Mono" font-size="15.4" fill="#f2e6e6" stroke="#f2e6e6" stroke-width="0.3">FM Broadcast</text>
<rect x="736" y="152" width="1.4" height="331" fill="#ff1a1a"/>
<rect x="358.2" y="152" width="1.6" height="332" fill="#8c8c8c"/>
<rect x="358.2" y="482.4" width="758" height="1.6" fill="#b4b4b4"/>
<text x="356.3" y="157.1" text-anchor="end" font-family="Liberation Sans" font-size="13.8" fill="#d0d0d0">0</text>
<text x="356.3" y="180.7" text-anchor="end" font-family="Liberation Sans" font-size="13.8" fill="#d0d0d0">-5</text>
<text x="356.3" y="204.4" text-anchor="end" font-family="Liberation Sans" font-size="13.8" fill="#d0d0d0">-10</text>
<text x="356.3" y="228.0" text-anchor="end" font-family="Liberation Sans" font-size="13.8" fill="#d0d0d0">-15</text>
<text x="356.3" y="251.7" text-anchor="end" font-family="Liberation Sans" font-size="13.8" fill="#d0d0d0">-20</text>
<text x="356.3" y="275.3" text-anchor="end" font-family="Liberation Sans" font-size="13.8" fill="#d0d0d0">-25</text>
<text x="356.3" y="299.0" text-anchor="end" font-family="Liberation Sans" font-size="13.8" fill="#d0d0d0">-30</text>
<text x="356.3" y="322.6" text-anchor="end" font-family="Liberation Sans" font-size="13.8" fill="#d0d0d0">-35</text>
<text x="356.3" y="346.2" text-anchor="end" font-family="Liberation Sans" font-size="13.8" fill="#d0d0d0">-40</text>
<text x="356.3" y="369.9" text-anchor="end" font-family="Liberation Sans" font-size="13.8" fill="#d0d0d0">-45</text>
<text x="356.3" y="393.5" text-anchor="end" font-family="Liberation Sans" font-size="13.8" fill="#d0d0d0">-50</text>
<text x="356.3" y="417.2" text-anchor="end" font-family="Liberation Sans" font-size="13.8" fill="#d0d0d0">-55</text>
<text x="356.3" y="440.8" text-anchor="end" font-family="Liberation Sans" font-size="13.8" fill="#d0d0d0">-60</text>
<text x="356.3" y="464.5" text-anchor="end" font-family="Liberation Sans" font-size="13.8" fill="#d0d0d0">-65</text>
<text x="356.3" y="488.1" text-anchor="end" font-family="Liberation Sans" font-size="13.8" fill="#d0d0d0">-70</text>
<rect x="496.55" y="483" width="1.5" height="7" fill="#8c8c8c"/>
<text x="497.3" y="506.8" text-anchor="middle" font-family="Liberation Sans" font-size="13.5" fill="#d0d0d0">97.750 M</text>
<rect x="667.65" y="483" width="1.5" height="7" fill="#8c8c8c"/>
<text x="668.4" y="506.8" text-anchor="middle" font-family="Liberation Sans" font-size="13.5" fill="#d0d0d0">98.000 M</text>
<rect x="839.05" y="483" width="1.5" height="7" fill="#8c8c8c"/>
<text x="839.8" y="506.8" text-anchor="middle" font-family="Liberation Sans" font-size="13.5" fill="#d0d0d0">98.250 M</text>
<rect x="1010.85" y="483" width="1.5" height="7" fill="#8c8c8c"/>
<text x="1011.6" y="506.8" text-anchor="middle" font-family="Liberation Sans" font-size="13.5" fill="#d0d0d0">98.500 M</text>
<rect x="1124.8" y="152.5" width="17.4" height="331" fill="#343434"/>
<rect x="1127.2" y="372.8" width="12.7" height="110.5" fill="#000092"/>
<text x="1133.4" y="367.9" text-anchor="middle" font-family="Liberation Sans" font-size="14.5" fill="#e0e0e0">34</text>
<text x="361.3" y="139.2" font-family="Liberation Mono" font-size="15.45" fill="#ececec" stroke="#ececec" stroke-width="0.3" xml:space="preserve">(((          ))) - 2678 - Mauro Giuliani :La Rossiniana No.6, Op.124</text>
</svg>
<svg class="a" style="left:325px;top:525px" width="827" height="376" viewBox="325 525 827 376">
<defs>
<linearGradient id="cb" x1="0" y1="0" x2="0" y2="1">
<stop offset="0" stop-color="#4a0000"/>
<stop offset="0.24" stop-color="#a00000"/>
<stop offset="0.34" stop-color="#ff0000"/>
<stop offset="0.43" stop-color="#ff8000"/>
<stop offset="0.53" stop-color="#ffff00"/>
<stop offset="0.61" stop-color="#ffffff"/>
<stop offset="0.68" stop-color="#40a0ff"/>
<stop offset="0.74" stop-color="#0040c0"/>
<stop offset="0.82" stop-color="#000080"/>
<stop offset="1" stop-color="#000030"/>
</linearGradient>
<linearGradient id="prof" gradientUnits="userSpaceOnUse" x1="359" y1="0" x2="1115" y2="0"><stop offset="0.00000" stop-color="rgb(14,26,0)"/><stop offset="0.02513" stop-color="rgb(14,26,0)"/><stop offset="0.02579" stop-color="rgb(15,26,0)"/><stop offset="0.02646" stop-color="rgb(17,26,0)"/><stop offset="0.02712" stop-color="rgb(19,26,0)"/><stop offset="0.02844" stop-color="rgb(19,26,0)"/><stop offset="0.02910" stop-color="rgb(17,26,0)"/><stop offset="0.02976" stop-color="rgb(15,26,0)"/><stop offset="0.03042" stop-color="rgb(14,26,0)"/><stop offset="0.04365" stop-color="rgb(14,26,0)"/><stop offset="0.04431" stop-color="rgb(19,26,0)"/><stop offset="0.04497" stop-color="rgb(24,26,0)"/><stop offset="0.04563" stop-color="rgb(26,26,0)"/><stop offset="0.04696" stop-color="rgb(26,26,0)"/><stop offset="0.04762" stop-color="rgb(24,26,0)"/><stop offset="0.04828" stop-color="rgb(19,26,0)"/><stop offset="0.04894" stop-color="rgb(14,26,0)"/><stop offset="0.07011" stop-color="rgb(14,26,0)"/><stop offset="0.07077" stop-color="rgb(17,26,0)"/><stop offset="0.07143" stop-color="rgb(20,26,0)"/><stop offset="0.07209" stop-color="rgb(22,26,0)"/><stop offset="0.07341" stop-color="rgb(22,26,0)"/><stop offset="0.07407" stop-color="rgb(20,26,0)"/><stop offset="0.07474" stop-color="rgb(17,26,0)"/><stop offset="0.07540" stop-color="rgb(14,26,0)"/><stop offset="0.09854" stop-color="rgb(14,26,0)"/><stop offset="0.09921" stop-color="rgb(19,26,0)"/><stop offset="0.09987" stop-color="rgb(44,26,0)"/><stop offset="0.10053" stop-color="rgb(69,26,0)"/><stop offset="0.10119" stop-color="rgb(74,26,0)"/><stop offset="0.10516" stop-color="rgb(74,26,0)"/><stop offset="0.10582" stop-color="rgb(49,26,0)"/><stop offset="0.10648" stop-color="rgb(24,26,0)"/><stop offset="0.10714" stop-color="rgb(14,26,0)"/><stop offset="0.13624" stop-color="rgb(14,26,0)"/><stop offset="0.13690" stop-color="rgb(18,26,0)"/><stop offset="0.13757" stop-color="rgb(25,26,0)"/><stop offset="0.13823" stop-color="rgb(31,26,0)"/><stop offset="0.13955" stop-color="rgb(31,26,0)"/><stop offset="0.14021" stop-color="rgb(25,26,0)"/><stop offset="0.14087" stop-color="rgb(18,26,0)"/><stop offset="0.14153" stop-color="rgb(14,26,0)"/><stop offset="0.20833" stop-color="rgb(14,26,0)"/><stop offset="0.20899" stop-color="rgb(26,26,0)"/><stop offset="0.20966" stop-color="rgb(47,26,0)"/><stop offset="0.21032" stop-color="rgb(64,26,0)"/><stop offset="0.21296" stop-color="rgb(64,26,0)"/><stop offset="0.21362" stop-color="rgb(47,26,0)"/><stop offset="0.21429" stop-color="rgb(26,26,0)"/><stop offset="0.21495" stop-color="rgb(14,26,0)"/><stop offset="0.26323" stop-color="rgb(14,26,0)"/><stop offset="0.26389" stop-color="rgb(33,26,0)"/><stop offset="0.26455" stop-color="rgb(60,26,0)"/><stop offset="0.26521" stop-color="rgb(79,26,0)"/><stop offset="0.26653" stop-color="rgb(79,26,0)"/><stop offset="0.26720" stop-color="rgb(60,26,0)"/><stop offset="0.26786" stop-color="rgb(33,26,0)"/><stop offset="0.26852" stop-color="rgb(60,26,0)"/><stop offset="0.26918" stop-color="rgb(79,26,0)"/><stop offset="0.27050" stop-color="rgb(79,26,0)"/><stop offset="0.27116" stop-color="rgb(60,26,0)"/><stop offset="0.27183" stop-color="rgb(33,26,0)"/><stop offset="0.27249" stop-color="rgb(14,26,0)"/><stop offset="0.27778" stop-color="rgb(14,26,0)"/><stop offset="0.27844" stop-color="rgb(16,26,0)"/><stop offset="0.27910" stop-color="rgb(19,26,0)"/><stop offset="0.27976" stop-color="rgb(23,26,0)"/><stop offset="0.28108" stop-color="rgb(23,26,0)"/><stop offset="0.28175" stop-color="rgb(19,26,0)"/><stop offset="0.28241" stop-color="rgb(16,26,0)"/><stop offset="0.28307" stop-color="rgb(14,26,0)"/><stop offset="0.29233" stop-color="rgb(14,26,0)"/><stop offset="0.29299" stop-color="rgb(15,26,0)"/><stop offset="0.29365" stop-color="rgb(22,26,0)"/><stop offset="0.29431" stop-color="rgb(29,26,0)"/><stop offset="0.29497" stop-color="rgb(31,26,0)"/><stop offset="0.29630" stop-color="rgb(31,26,0)"/><stop offset="0.29696" stop-color="rgb(26,26,0)"/><stop offset="0.29762" stop-color="rgb(20,26,0)"/><stop offset="0.29828" stop-color="rgb(14,26,0)"/><stop offset="0.31944" stop-color="rgb(14,26,0)"/><stop offset="0.32011" stop-color="rgb(74,28,0)"/><stop offset="0.39749" stop-color="rgb(74,28,0)"/><stop offset="0.39815" stop-color="rgb(14,26,0)"/><stop offset="0.41931" stop-color="rgb(14,26,0)"/><stop offset="0.41997" stop-color="rgb(15,26,0)"/><stop offset="0.42063" stop-color="rgb(15,26,0)"/><stop offset="0.42130" stop-color="rgb(16,26,0)"/><stop offset="0.42196" stop-color="rgb(16,26,0)"/><stop offset="0.42262" stop-color="rgb(17,26,0)"/><stop offset="0.42328" stop-color="rgb(17,26,0)"/><stop offset="0.42394" stop-color="rgb(18,26,0)"/><stop offset="0.42460" stop-color="rgb(18,28,0)"/><stop offset="0.42526" stop-color="rgb(19,31,0)"/><stop offset="0.42593" stop-color="rgb(19,34,0)"/><stop offset="0.42659" stop-color="rgb(20,37,0)"/><stop offset="0.42725" stop-color="rgb(20,40,0)"/><stop offset="0.42791" stop-color="rgb(20,43,0)"/><stop offset="0.42857" stop-color="rgb(21,46,0)"/><stop offset="0.42923" stop-color="rgb(21,49,0)"/><stop offset="0.42989" stop-color="rgb(22,52,0)"/><stop offset="0.43056" stop-color="rgb(22,55,0)"/><stop offset="0.43122" stop-color="rgb(23,58,0)"/><stop offset="0.43188" stop-color="rgb(23,61,0)"/><stop offset="0.43254" stop-color="rgb(24,63,0)"/><stop offset="0.43320" stop-color="rgb(24,66,0)"/><stop offset="0.43386" stop-color="rgb(25,69,0)"/><stop offset="0.43452" stop-color="rgb(25,72,0)"/><stop offset="0.43519" stop-color="rgb(26,75,0)"/><stop offset="0.43585" stop-color="rgb(26,78,0)"/><stop offset="0.43651" stop-color="rgb(26,81,0)"/><stop offset="0.43717" stop-color="rgb(27,84,0)"/><stop offset="0.43783" stop-color="rgb(27,87,0)"/><stop offset="0.43849" stop-color="rgb(28,90,0)"/><stop offset="0.43915" stop-color="rgb(28,93,0)"/><stop offset="0.43981" stop-color="rgb(29,96,0)"/><stop offset="0.44048" stop-color="rgb(29,99,0)"/><stop offset="0.44114" stop-color="rgb(30,101,0)"/><stop offset="0.44180" stop-color="rgb(30,104,0)"/><stop offset="0.44246" stop-color="rgb(31,107,0)"/><stop offset="0.44312" stop-color="rgb(32,110,0)"/><stop offset="0.44378" stop-color="rgb(34,113,0)"/><stop offset="0.44444" stop-color="rgb(35,116,0)"/><stop offset="0.44511" stop-color="rgb(37,119,0)"/><stop offset="0.44577" stop-color="rgb(39,122,0)"/><stop offset="0.44643" stop-color="rgb(40,125,0)"/><stop offset="0.44709" stop-color="rgb(42,128,0)"/><stop offset="0.44775" stop-color="rgb(43,131,0)"/><stop offset="0.44841" stop-color="rgb(45,134,0)"/><stop offset="0.44907" stop-color="rgb(47,137,0)"/><stop offset="0.44974" stop-color="rgb(48,139,0)"/><stop offset="0.45040" stop-color="rgb(50,142,0)"/><stop offset="0.45106" stop-color="rgb(51,145,0)"/><stop offset="0.45172" stop-color="rgb(53,148,0)"/><stop offset="0.45238" stop-color="rgb(55,151,0)"/><stop offset="0.45304" stop-color="rgb(56,154,0)"/><stop offset="0.45370" stop-color="rgb(58,157,0)"/><stop offset="0.45437" stop-color="rgb(59,160,0)"/><stop offset="0.45503" stop-color="rgb(61,163,0)"/><stop offset="0.45569" stop-color="rgb(62,166,0)"/><stop offset="0.45635" stop-color="rgb(64,166,0)"/><stop offset="0.45701" stop-color="rgb(66,166,0)"/><stop offset="0.45767" stop-color="rgb(67,166,0)"/><stop offset="0.45833" stop-color="rgb(69,166,0)"/><stop offset="0.45899" stop-color="rgb(71,166,0)"/><stop offset="0.45966" stop-color="rgb(73,166,0)"/><stop offset="0.46032" stop-color="rgb(74,166,0)"/><stop offset="0.46098" stop-color="rgb(76,166,0)"/><stop offset="0.46164" stop-color="rgb(78,166,0)"/><stop offset="0.46230" stop-color="rgb(80,166,0)"/><stop offset="0.46296" stop-color="rgb(82,166,0)"/><stop offset="0.46362" stop-color="rgb(84,166,0)"/><stop offset="0.46429" stop-color="rgb(85,166,0)"/><stop offset="0.46495" stop-color="rgb(87,166,0)"/><stop offset="0.46561" stop-color="rgb(89,166,0)"/><stop offset="0.46627" stop-color="rgb(91,166,0)"/><stop offset="0.46693" stop-color="rgb(93,166,0)"/><stop offset="0.46759" stop-color="rgb(95,166,0)"/><stop offset="0.46825" stop-color="rgb(96,166,0)"/><stop offset="0.46892" stop-color="rgb(98,166,0)"/><stop offset="0.46958" stop-color="rgb(99,166,0)"/><stop offset="0.47024" stop-color="rgb(101,166,0)"/><stop offset="0.47090" stop-color="rgb(102,166,0)"/><stop offset="0.47156" stop-color="rgb(103,166,0)"/><stop offset="0.47222" stop-color="rgb(104,166,0)"/><stop offset="0.47288" stop-color="rgb(105,166,0)"/><stop offset="0.47354" stop-color="rgb(107,166,0)"/><stop offset="0.47421" stop-color="rgb(108,166,0)"/><stop offset="0.47487" stop-color="rgb(109,166,0)"/><stop offset="0.47553" stop-color="rgb(110,173,0)"/><stop offset="0.47619" stop-color="rgb(111,168,0)"/><stop offset="0.47685" stop-color="rgb(113,163,0)"/><stop offset="0.47751" stop-color="rgb(114,157,0)"/><stop offset="0.47817" stop-color="rgb(115,152,0)"/><stop offset="0.47884" stop-color="rgb(116,146,0)"/><stop offset="0.47950" stop-color="rgb(117,141,0)"/><stop offset="0.48016" stop-color="rgb(117,135,0)"/><stop offset="0.48082" stop-color="rgb(117,130,0)"/><stop offset="0.48148" stop-color="rgb(117,125,0)"/><stop offset="0.48214" stop-color="rgb(118,119,0)"/><stop offset="0.48280" stop-color="rgb(118,114,0)"/><stop offset="0.48347" stop-color="rgb(118,108,0)"/><stop offset="0.48413" stop-color="rgb(118,103,0)"/><stop offset="0.48479" stop-color="rgb(118,98,0)"/><stop offset="0.48545" stop-color="rgb(118,92,0)"/><stop offset="0.48611" stop-color="rgb(118,87,0)"/><stop offset="0.49074" stop-color="rgb(118,87,0)"/><stop offset="0.49140" stop-color="rgb(119,87,0)"/><stop offset="0.50463" stop-color="rgb(119,87,0)"/><stop offset="0.50529" stop-color="rgb(118,87,0)"/><stop offset="0.50992" stop-color="rgb(118,87,0)"/><stop offset="0.51058" stop-color="rgb(118,92,0)"/><stop offset="0.51124" stop-color="rgb(118,98,0)"/><stop offset="0.51190" stop-color="rgb(118,103,0)"/><stop offset="0.51257" stop-color="rgb(118,108,0)"/><stop offset="0.51323" stop-color="rgb(118,114,0)"/><stop offset="0.51389" stop-color="rgb(118,119,0)"/><stop offset="0.51455" stop-color="rgb(117,125,0)"/><stop offset="0.51521" stop-color="rgb(117,130,0)"/><stop offset="0.51587" stop-color="rgb(117,135,0)"/><stop offset="0.51653" stop-color="rgb(117,141,0)"/><stop offset="0.51720" stop-color="rgb(116,146,0)"/><stop offset="0.51786" stop-color="rgb(115,152,0)"/><stop offset="0.51852" stop-color="rgb(114,157,0)"/><stop offset="0.51918" stop-color="rgb(113,163,0)"/><stop offset="0.51984" stop-color="rgb(111,168,0)"/><stop offset="0.52050" stop-color="rgb(110,173,0)"/><stop offset="0.52116" stop-color="rgb(109,166,0)"/><stop offset="0.52183" stop-color="rgb(108,166,0)"/><stop offset="0.52249" stop-color="rgb(107,166,0)"/><stop offset="0.52315" stop-color="rgb(105,166,0)"/><stop offset="0.52381" stop-color="rgb(104,166,0)"/><stop offset="0.52447" stop-color="rgb(103,166,0)"/><stop offset="0.52513" stop-color="rgb(102,166,0)"/><stop offset="0.52579" stop-color="rgb(101,166,0)"/><stop offset="0.52646" stop-color="rgb(99,166,0)"/><stop offset="0.52712" stop-color="rgb(98,166,0)"/><stop offset="0.52778" stop-color="rgb(96,166,0)"/><stop offset="0.52844" stop-color="rgb(95,166,0)"/><stop offset="0.52910" stop-color="rgb(93,166,0)"/><stop offset="0.52976" stop-color="rgb(91,166,0)"/><stop offset="0.53042" stop-color="rgb(89,166,0)"/><stop offset="0.53108" stop-color="rgb(87,166,0)"/><stop offset="0.53175" stop-color="rgb(85,166,0)"/><stop offset="0.53241" stop-color="rgb(84,166,0)"/><stop offset="0.53307" stop-color="rgb(82,166,0)"/><stop offset="0.53373" stop-color="rgb(80,166,0)"/><stop offset="0.53439" stop-color="rgb(78,166,0)"/><stop offset="0.53505" stop-color="rgb(76,166,0)"/><stop offset="0.53571" stop-color="rgb(74,166,0)"/><stop offset="0.53638" stop-color="rgb(73,166,0)"/><stop offset="0.53704" stop-color="rgb(71,166,0)"/><stop offset="0.53770" stop-color="rgb(69,166,0)"/><stop offset="0.53836" stop-color="rgb(67,166,0)"/><stop offset="0.53902" stop-color="rgb(66,166,0)"/><stop offset="0.53968" stop-color="rgb(64,166,0)"/><stop offset="0.54034" stop-color="rgb(62,166,0)"/><stop offset="0.54101" stop-color="rgb(61,163,0)"/><stop offset="0.54167" stop-color="rgb(59,160,0)"/><stop offset="0.54233" stop-color="rgb(58,157,0)"/><stop offset="0.54299" stop-color="rgb(56,154,0)"/><stop offset="0.54365" stop-color="rgb(55,151,0)"/><stop offset="0.54431" stop-color="rgb(53,148,0)"/><stop offset="0.54497" stop-color="rgb(51,145,0)"/><stop offset="0.54563" stop-color="rgb(50,142,0)"/><stop offset="0.54630" stop-color="rgb(48,139,0)"/><stop offset="0.54696" stop-color="rgb(47,137,0)"/><stop offset="0.54762" stop-color="rgb(45,134,0)"/><stop offset="0.54828" stop-color="rgb(43,131,0)"/><stop offset="0.54894" stop-color="rgb(42,128,0)"/><stop offset="0.54960" stop-color="rgb(40,125,0)"/><stop offset="0.55026" stop-color="rgb(39,122,0)"/><stop offset="0.55093" stop-color="rgb(37,119,0)"/><stop offset="0.55159" stop-color="rgb(35,116,0)"/><stop offset="0.55225" stop-color="rgb(34,113,0)"/><stop offset="0.55291" stop-color="rgb(32,110,0)"/><stop offset="0.55357" stop-color="rgb(31,107,0)"/><stop offset="0.55423" stop-color="rgb(30,104,0)"/><stop offset="0.55489" stop-color="rgb(30,101,0)"/><stop offset="0.55556" stop-color="rgb(29,99,0)"/><stop offset="0.55622" stop-color="rgb(29,96,0)"/><stop offset="0.55688" stop-color="rgb(28,93,0)"/><stop offset="0.55754" stop-color="rgb(28,90,0)"/><stop offset="0.55820" stop-color="rgb(27,87,0)"/><stop offset="0.55886" stop-color="rgb(27,84,0)"/><stop offset="0.55952" stop-color="rgb(26,81,0)"/><stop offset="0.56019" stop-color="rgb(26,78,0)"/><stop offset="0.56085" stop-color="rgb(26,75,0)"/><stop offset="0.56151" stop-color="rgb(25,72,0)"/><stop offset="0.56217" stop-color="rgb(25,69,0)"/><stop offset="0.56283" stop-color="rgb(24,66,0)"/><stop offset="0.56349" stop-color="rgb(24,63,0)"/><stop offset="0.56415" stop-color="rgb(23,61,0)"/><stop offset="0.56481" stop-color="rgb(23,58,0)"/><stop offset="0.56548" stop-color="rgb(22,55,0)"/><stop offset="0.56614" stop-color="rgb(22,52,0)"/><stop offset="0.56680" stop-color="rgb(21,49,0)"/><stop offset="0.56746" stop-color="rgb(21,46,0)"/><stop offset="0.56812" stop-color="rgb(20,43,0)"/><stop offset="0.56878" stop-color="rgb(20,40,0)"/><stop offset="0.56944" stop-color="rgb(20,37,0)"/><stop offset="0.57011" stop-color="rgb(19,34,0)"/><stop offset="0.57077" stop-color="rgb(19,31,0)"/><stop offset="0.57143" stop-color="rgb(18,28,0)"/><stop offset="0.57209" stop-color="rgb(18,26,0)"/><stop offset="0.57275" stop-color="rgb(17,26,0)"/><stop offset="0.57341" stop-color="rgb(17,26,0)"/><stop offset="0.57407" stop-color="rgb(16,26,0)"/><stop offset="0.57474" stop-color="rgb(16,26,0)"/><stop offset="0.57540" stop-color="rgb(15,26,0)"/><stop offset="0.57606" stop-color="rgb(15,26,0)"/><stop offset="0.57672" stop-color="rgb(14,26,0)"/><stop offset="0.59987" stop-color="rgb(14,26,0)"/><stop offset="0.60053" stop-color="rgb(20,26,0)"/><stop offset="0.60119" stop-color="rgb(26,26,0)"/><stop offset="0.60185" stop-color="rgb(31,26,0)"/><stop offset="0.60317" stop-color="rgb(31,26,0)"/><stop offset="0.60384" stop-color="rgb(29,26,0)"/><stop offset="0.60450" stop-color="rgb(22,26,0)"/><stop offset="0.60516" stop-color="rgb(15,26,0)"/><stop offset="0.60582" stop-color="rgb(51,33,0)"/><stop offset="0.68122" stop-color="rgb(51,33,0)"/><stop offset="0.68188" stop-color="rgb(14,26,0)"/><stop offset="0.70635" stop-color="rgb(14,26,0)"/><stop offset="0.70701" stop-color="rgb(19,26,0)"/><stop offset="0.70767" stop-color="rgb(33,26,0)"/><stop offset="0.70833" stop-color="rgb(46,26,0)"/><stop offset="0.71098" stop-color="rgb(46,26,0)"/><stop offset="0.71164" stop-color="rgb(33,26,0)"/><stop offset="0.71230" stop-color="rgb(19,26,0)"/><stop offset="0.71296" stop-color="rgb(14,26,0)"/><stop offset="0.76124" stop-color="rgb(14,26,0)"/><stop offset="0.76190" stop-color="rgb(32,26,0)"/><stop offset="0.76257" stop-color="rgb(62,26,0)"/><stop offset="0.76323" stop-color="rgb(85,26,0)"/><stop offset="0.76587" stop-color="rgb(85,26,0)"/><stop offset="0.76653" stop-color="rgb(62,26,0)"/><stop offset="0.76720" stop-color="rgb(32,26,0)"/><stop offset="0.76786" stop-color="rgb(14,26,0)"/><stop offset="0.81614" stop-color="rgb(14,26,0)"/><stop offset="0.81680" stop-color="rgb(30,26,0)"/><stop offset="0.81746" stop-color="rgb(56,26,0)"/><stop offset="0.81812" stop-color="rgb(76,26,0)"/><stop offset="0.82077" stop-color="rgb(76,26,0)"/><stop offset="0.82143" stop-color="rgb(56,26,0)"/><stop offset="0.82209" stop-color="rgb(30,26,0)"/><stop offset="0.82275" stop-color="rgb(14,26,0)"/><stop offset="0.87302" stop-color="rgb(14,26,0)"/><stop offset="0.87368" stop-color="rgb(44,26,0)"/><stop offset="0.87434" stop-color="rgb(75,26,0)"/><stop offset="0.87500" stop-color="rgb(87,26,0)"/><stop offset="0.87765" stop-color="rgb(87,26,0)"/><stop offset="0.87831" stop-color="rgb(62,26,0)"/><stop offset="0.87897" stop-color="rgb(32,26,0)"/><stop offset="0.87963" stop-color="rgb(14,26,0)"/><stop offset="0.92460" stop-color="rgb(14,26,0)"/><stop offset="0.92526" stop-color="rgb(16,26,0)"/><stop offset="0.92593" stop-color="rgb(21,26,0)"/><stop offset="0.92659" stop-color="rgb(26,26,0)"/><stop offset="0.92791" stop-color="rgb(26,26,0)"/><stop offset="0.92857" stop-color="rgb(21,26,0)"/><stop offset="0.92923" stop-color="rgb(16,26,0)"/><stop offset="0.92989" stop-color="rgb(14,26,0)"/><stop offset="0.95503" stop-color="rgb(14,26,0)"/><stop offset="0.95569" stop-color="rgb(25,26,0)"/><stop offset="0.95635" stop-color="rgb(42,26,0)"/><stop offset="0.95701" stop-color="rgb(56,26,0)"/><stop offset="0.95899" stop-color="rgb(56,26,0)"/><stop offset="0.95966" stop-color="rgb(53,26,0)"/><stop offset="0.96032" stop-color="rgb(35,26,0)"/><stop offset="0.96098" stop-color="rgb(18,26,0)"/><stop offset="0.96164" stop-color="rgb(14,26,0)"/><stop offset="1.00000" stop-color="rgb(14,26,0)"/></linearGradient>
<filter id="wf" x="359" y="525" width="756" height="376" filterUnits="userSpaceOnUse" color-interpolation-filters="sRGB">
<feTurbulence type="fractalNoise" baseFrequency="0.55 0.55" numOctaves="3" seed="9" result="nraw"/>
<feColorMatrix in="nraw" type="matrix" values="1 0 0 0 0 1 0 0 0 0 1 0 0 0 0 0 0 0 0 1" result="ng"/>
<feComponentTransfer in="ng" result="nz"><feFuncR type="linear" slope="2.2" intercept="-0.6"/><feFuncG type="linear" slope="2.2" intercept="-0.6"/><feFuncB type="linear" slope="2.2" intercept="-0.6"/></feComponentTransfer>
<feColorMatrix in="SourceGraphic" type="matrix" values="1 0 0 0 0 1 0 0 0 0 1 0 0 0 0 0 0 0 0 1" result="prof"/>
<feColorMatrix in="SourceGraphic" type="matrix" values="0 1 0 0 0 0 1 0 0 0 0 1 0 0 0 0 0 0 0 1" result="wgt"/>
<feColorMatrix in="SourceGraphic" type="matrix" values="0 -0.25 0 0 1 0 -0.25 0 0 1 0 -0.25 0 0 1 0 0 0 0 1" result="hinv"/>
<feComposite in="wgt" in2="nz" operator="arithmetic" k1="1" k2="0" k3="0" k4="0" result="wn"/>
<feComposite in="prof" in2="wn" operator="arithmetic" k1="0" k2="0.5" k3="0.5" k4="0" result="c"/>
<feComposite in="c" in2="hinv" operator="arithmetic" k1="0" k2="1" k3="1" k4="-1" result="v"/>
<feComponentTransfer in="v">
<feFuncR type="table" tableValues="0.000 0.000 0.000 0.000 0.000 0.000 0.000 0.000 0.000 0.000 0.000 0.000 0.000 0.000 0.000 0.000 0.000 0.024 0.089 0.154 0.220 0.338 0.505 0.672 0.839 1.000 1.000 1.000 1.000 1.000 1.000 1.000 1.000 1.000 1.000 1.000 1.000 1.000 1.000 1.000 1.000 1.000 1.000 0.956 0.898 0.839 0.781 0.723 0.665 0.620 0.598 0.576 0.554 0.532 0.510 0.488 0.466 0.444 0.422 0.400 0.378 0.356 0.334 0.312 0.290 0.290 0.290 0.290 0.290 0.290 0.290 0.290 0.290 0.290 0.290 0.290 0.290 0.290 0.290 0.290 0.290 0.290 0.290 0.290 0.290 0.290 0.290 0.290 0.290 0.290 0.290 0.290 0.290 0.290 0.290 0.290 0.290 0.290 0.290 0.290 0.290 0.290 0.290 0.290 0.290 0.290 0.290 0.290 0.290 0.290 0.290 0.290 0.290 0.290 0.290 0.290 0.290 0.290 0.290 0.290 0.290 0.290 0.290 0.290 0.290 0.290 0.290 0.290 0.290"/>
<feFuncG type="table" tableValues="0.000 0.000 0.000 0.000 0.000 0.000 0.000 0.000 0.000 0.000 0.000 0.000 0.024 0.073 0.122 0.171 0.220 0.286 0.384 0.482 0.580 0.671 0.754 0.837 0.920 1.000 1.000 1.000 1.000 1.000 1.000 0.928 0.851 0.773 0.695 0.617 0.539 0.457 0.369 0.282 0.195 0.108 0.021 0.000 0.000 0.000 0.000 0.000 0.000 0.000 0.000 0.000 0.000 0.000 0.000 0.000 0.000 0.000 0.000 0.000 0.000 0.000 0.000 0.000 0.000 0.000 0.000 0.000 0.000 0.000 0.000 0.000 0.000 0.000 0.000 0.000 0.000 0.000 0.000 0.000 0.000 0.000 0.000 0.000 0.000 0.000 0.000 0.000 0.000 0.000 0.000 0.000 0.000 0.000 0.000 0.000 0.000 0.000 0.000 0.000 0.000 0.000 0.000 0.000 0.000 0.000 0.000 0.000 0.000 0.000 0.000 0.000 0.000 0.000 0.000 0.000 0.000 0.000 0.000 0.000 0.000 0.000 0.000 0.000 0.000 0.000 0.000 0.000 0.000"/>
<feFuncB type="table" tableValues="0.157 0.187 0.217 0.247 0.277 0.307 0.337 0.367 0.397 0.426 0.456 0.486 0.525 0.575 0.624 0.673 0.722 0.776 0.840 0.905 0.969 1.000 1.000 1.000 1.000 0.992 0.797 0.602 0.406 0.211 0.016 0.000 0.000 0.000 0.000 0.000 0.000 0.000 0.000 0.000 0.000 0.000 0.000 0.000 0.000 0.000 0.000 0.000 0.000 0.000 0.000 0.000 0.000 0.000 0.000 0.000 0.000 0.000 0.000 0.000 0.000 0.000 0.000 0.000 0.000 0.000 0.000 0.000 0.000 0.000 0.000 0.000 0.000 0.000 0.000 0.000 0.000 0.000 0.000 0.000 0.000 0.000 0.000 0.000 0.000 0.000 0.000 0.000 0.000 0.000 0.000 0.000 0.000 0.000 0.000 0.000 0.000 0.000 0.000 0.000 0.000 0.000 0.000 0.000 0.000 0.000 0.000 0.000 0.000 0.000 0.000 0.000 0.000 0.000 0.000 0.000 0.000 0.000 0.000 0.000 0.000 0.000 0.000 0.000 0.000 0.000 0.000 0.000 0.000"/>
<feFuncA type="linear" slope="0" intercept="1"/>
</feComponentTransfer>
</filter>
<filter id="wff" x="668" y="525" width="136" height="376" filterUnits="userSpaceOnUse" color-interpolation-filters="sRGB">
<feTurbulence type="fractalNoise" baseFrequency="0.028 0.42" numOctaves="2" seed="5" result="s1"/><feTurbulence type="fractalNoise" baseFrequency="0.6 0.6" numOctaves="1" seed="13" result="s2"/><feComposite in="s1" in2="s2" operator="arithmetic" k1="0" k2="0.6" k3="0.4" k4="0" result="nraw"/>
<feColorMatrix in="nraw" type="matrix" values="1 0 0 0 0 1 0 0 0 0 1 0 0 0 0 0 0 0 0 1" result="ng"/>
<feComponentTransfer in="ng" result="nz"><feFuncR type="table" tableValues="0 0.04 0.12 0.22 0.36 0.5 0.64 0.74 0.8 0.84 0.86"/><feFuncG type="table" tableValues="0 0.04 0.12 0.22 0.36 0.5 0.64 0.74 0.8 0.84 0.86"/><feFuncB type="table" tableValues="0 0.04 0.12 0.22 0.36 0.5 0.64 0.74 0.8 0.84 0.86"/></feComponentTransfer>
<feColorMatrix in="SourceGraphic" type="matrix" values="1 0 0 0 0 1 0 0 0 0 1 0 0 0 0 0 0 0 0 1" result="prof"/>
<feColorMatrix in="SourceGraphic" type="matrix" values="0 1 0 0 0 0 1 0 0 0 0 1 0 0 0 0 0 0 0 1" result="wgt"/>
<feColorMatrix in="SourceGraphic" type="matrix" values="0 -0.25 0 0 1 0 -0.25 0 0 1 0 -0.25 0 0 1 0 0 0 0 1" result="hinv"/>
<feComposite in="wgt" in2="nz" operator="arithmetic" k1="1" k2="0" k3="0" k4="0" result="wn"/>
<feComposite in="prof" in2="wn" operator="arithmetic" k1="0" k2="0.5" k3="0.5" k4="0" result="c"/>
<feComposite in="c" in2="hinv" operator="arithmetic" k1="0" k2="1" k3="1" k4="-1" result="v"/>
<feComponentTransfer in="v">
<feFuncR type="table" tableValues="0.000 0.000 0.000 0.000 0.000 0.000 0.000 0.000 0.000 0.000 0.000 0.000 0.000 0.000 0.000 0.000 0.000 0.024 0.089 0.154 0.220 0.338 0.505 0.672 0.839 1.000 1.000 1.000 1.000 1.000 1.000 1.000 1.000 1.000 1.000 1.000 1.000 1.000 1.000 1.000 1.000 1.000 1.000 0.956 0.898 0.839 0.781 0.723 0.665 0.620 0.598 0.576 0.554 0.532 0.510 0.488 0.466 0.444 0.422 0.400 0.378 0.356 0.334 0.312 0.290 0.290 0.290 0.290 0.290 0.290 0.290 0.290 0.290 0.290 0.290 0.290 0.290 0.290 0.290 0.290 0.290 0.290 0.290 0.290 0.290 0.290 0.290 0.290 0.290 0.290 0.290 0.290 0.290 0.290 0.290 0.290 0.290 0.290 0.290 0.290 0.290 0.290 0.290 0.290 0.290 0.290 0.290 0.290 0.290 0.290 0.290 0.290 0.290 0.290 0.290 0.290 0.290 0.290 0.290 0.290 0.290 0.290 0.290 0.290 0.290 0.290 0.290 0.290 0.290"/>
<feFuncG type="table" tableValues="0.000 0.000 0.000 0.000 0.000 0.000 0.000 0.000 0.000 0.000 0.000 0.000 0.024 0.073 0.122 0.171 0.220 0.286 0.384 0.482 0.580 0.671 0.754 0.837 0.920 1.000 1.000 1.000 1.000 1.000 1.000 0.928 0.851 0.773 0.695 0.617 0.539 0.457 0.369 0.282 0.195 0.108 0.021 0.000 0.000 0.000 0.000 0.000 0.000 0.000 0.000 0.000 0.000 0.000 0.000 0.000 0.000 0.000 0.000 0.000 0.000 0.000 0.000 0.000 0.000 0.000 0.000 0.000 0.000 0.000 0.000 0.000 0.000 0.000 0.000 0.000 0.000 0.000 0.000 0.000 0.000 0.000 0.000 0.000 0.000 0.000 0.000 0.000 0.000 0.000 0.000 0.000 0.000 0.000 0.000 0.000 0.000 0.000 0.000 0.000 0.000 0.000 0.000 0.000 0.000 0.000 0.000 0.000 0.000 0.000 0.000 0.000 0.000 0.000 0.000 0.000 0.000 0.000 0.000 0.000 0.000 0.000 0.000 0.000 0.000 0.000 0.000 0.000 0.000"/>
<feFuncB type="table" tableValues="0.157 0.187 0.217 0.247 0.277 0.307 0.337 0.367 0.397 0.426 0.456 0.486 0.525 0.575 0.624 0.673 0.722 0.776 0.840 0.905 0.969 1.000 1.000 1.000 1.000 0.992 0.797 0.602 0.406 0.211 0.016 0.000 0.000 0.000 0.000 0.000 0.000 0.000 0.000 0.000 0.000 0.000 0.000 0.000 0.000 0.000 0.000 0.000 0.000 0.000 0.000 0.000 0.000 0.000 0.000 0.000 0.000 0.000 0.000 0.000 0.000 0.000 0.000 0.000 0.000 0.000 0.000 0.000 0.000 0.000 0.000 0.000 0.000 0.000 0.000 0.000 0.000 0.000 0.000 0.000 0.000 0.000 0.000 0.000 0.000 0.000 0.000 0.000 0.000 0.000 0.000 0.000 0.000 0.000 0.000 0.000 0.000 0.000 0.000 0.000 0.000 0.000 0.000 0.000 0.000 0.000 0.000 0.000 0.000 0.000 0.000 0.000 0.000 0.000 0.000 0.000 0.000 0.000 0.000 0.000 0.000 0.000 0.000 0.000 0.000 0.000 0.000 0.000 0.000"/>
<feFuncA type="linear" slope="0" intercept="1"/>
</feComponentTransfer>
</filter>
</defs>
<rect x="325" y="525" width="827" height="376" fill="#000"/>
<rect x="359" y="525" width="756" height="376" fill="url(#prof)" filter="url(#wf)"/>
<rect x="668" y="525" width="136" height="376" fill="url(#prof)" filter="url(#wff)"/>
<rect x="1127" y="540" width="13" height="342" fill="url(#cb)"/>
</svg>
<div class="t" style="left:1168px;top:119.31px;font-size:14.4px;letter-spacing:-0.45px">Zoom</div>
<div class="a" style="left:1181px;top:150.3px;width:5px;height:145.7px;background:#e7eaea;border:1px solid #d6d6d6"></div>
<div class="a" style="left:1163.6px;top:156.5px;width:5px;height:1px;background:#b2b2b2"></div>
<div class="a" style="left:1198.6px;top:156.5px;width:5px;height:1px;background:#b2b2b2"></div>
<div class="a" style="left:1165.1px;top:169.7px;width:3.5px;height:1px;background:#b2b2b2"></div>
<div class="a" style="left:1198.6px;top:169.7px;width:3.5px;height:1px;background:#b2b2b2"></div>
<div class="a" style="left:1165.1px;top:183.0px;width:3.5px;height:1px;background:#b2b2b2"></div>
<div class="a" style="left:1198.6px;top:183.0px;width:3.5px;height:1px;background:#b2b2b2"></div>
<div class="a" style="left:1165.1px;top:196.2px;width:3.5px;height:1px;background:#b2b2b2"></div>
<div class="a" style="left:1198.6px;top:196.2px;width:3.5px;height:1px;background:#b2b2b2"></div>
<div class="a" style="left:1165.1px;top:209.5px;width:3.5px;height:1px;background:#b2b2b2"></div>
<div class="a" style="left:1198.6px;top:209.5px;width:3.5px;height:1px;background:#b2b2b2"></div>
<div class="a" style="left:1165.1px;top:222.7px;width:3.5px;height:1px;background:#b2b2b2"></div>
<div class="a" style="left:1198.6px;top:222.7px;width:3.5px;height:1px;background:#b2b2b2"></div>
<div class="a" style="left:1165.1px;top:235.9px;width:3.5px;height:1px;background:#b2b2b2"></div>
<div class="a" style="left:1198.6px;top:235.9px;width:3.5px;height:1px;background:#b2b2b2"></div>
<div class="a" style="left:1165.1px;top:249.2px;width:3.5px;height:1px;background:#b2b2b2"></div>
<div class="a" style="left:1198.6px;top:249.2px;width:3.5px;height:1px;background:#b2b2b2"></div>
<div class="a" style="left:1165.1px;top:262.4px;width:3.5px;height:1px;background:#b2b2b2"></div>
<div class="a" style="left:1198.6px;top:262.4px;width:3.5px;height:1px;background:#b2b2b2"></div>
<div class="a" style="left:1165.1px;top:275.7px;width:3.5px;height:1px;background:#b2b2b2"></div>
<div class="a" style="left:1198.6px;top:275.7px;width:3.5px;height:1px;background:#b2b2b2"></div>
<div class="a" style="left:1163.6px;top:288.9px;width:5px;height:1px;background:#b2b2b2"></div>
<div class="a" style="left:1198.6px;top:288.9px;width:5px;height:1px;background:#b2b2b2"></div>
<div class="a" style="left:1170px;top:275.2px;width:26px;height:12.5px;background:#0078d7"></div>
<div class="t" style="left:1159.6px;top:313.81px;font-size:14.4px;letter-spacing:-0.45px">Contrast</div>
<div class="a" style="left:1181px;top:345.5px;width:5px;height:145.5px;background:#e7eaea;border:1px solid #d6d6d6"></div>
<div class="a" style="left:1163.6px;top:351.5px;width:5px;height:1px;background:#b2b2b2"></div>
<div class="a" style="left:1198.6px;top:351.5px;width:5px;height:1px;background:#b2b2b2"></div>
<div class="a" style="left:1165.1px;top:368.0px;width:3.5px;height:1px;background:#b2b2b2"></div>
<div class="a" style="left:1198.6px;top:368.0px;width:3.5px;height:1px;background:#b2b2b2"></div>
<div class="a" style="left:1165.1px;top:384.6px;width:3.5px;height:1px;background:#b2b2b2"></div>
<div class="a" style="left:1198.6px;top:384.6px;width:3.5px;height:1px;background:#b2b2b2"></div>
<div class="a" style="left:1165.1px;top:401.1px;width:3.5px;height:1px;background:#b2b2b2"></div>
<div class="a" style="left:1198.6px;top:401.1px;width:3.5px;height:1px;background:#b2b2b2"></div>
<div class="a" style="left:1165.1px;top:417.6px;width:3.5px;height:1px;background:#b2b2b2"></div>
<div class="a" style="left:1198.6px;top:417.6px;width:3.5px;height:1px;background:#b2b2b2"></div>
<div class="a" style="left:1165.1px;top:434.2px;width:3.5px;height:1px;background:#b2b2b2"></div>
<div class="a" style="left:1198.6px;top:434.2px;width:3.5px;height:1px;background:#b2b2b2"></div>
<div class="a" style="left:1165.1px;top:450.7px;width:3.5px;height:1px;background:#b2b2b2"></div>
<div class="a" style="left:1198.6px;top:450.7px;width:3.5px;height:1px;background:#b2b2b2"></div>
<div class="a" style="left:1165.1px;top:467.3px;width:3.5px;height:1px;background:#b2b2b2"></div>
<div class="a" style="left:1198.6px;top:467.3px;width:3.5px;height:1px;background:#b2b2b2"></div>
<div class="a" style="left:1163.6px;top:483.8px;width:5px;height:1px;background:#b2b2b2"></div>
<div class="a" style="left:1198.6px;top:483.8px;width:5px;height:1px;background:#b2b2b2"></div>
<div class="a" style="left:1170px;top:450.4px;width:26px;height:12.5px;background:#0078d7"></div>
<div class="t" style="left:1164.8px;top:509.31px;font-size:14.4px;letter-spacing:-0.45px">Range</div>
<div class="a" style="left:1181px;top:540.3px;width:5px;height:146.1px;background:#e7eaea;border:1px solid #d6d6d6"></div>
<div class="a" style="left:1163.6px;top:546.3px;width:5px;height:1px;background:#b2b2b2"></div>
<div class="a" style="left:1198.6px;top:546.3px;width:5px;height:1px;background:#b2b2b2"></div>
<div class="a" style="left:1165.1px;top:555.8px;width:3.5px;height:1px;background:#b2b2b2"></div>
<div class="a" style="left:1198.6px;top:555.8px;width:3.5px;height:1px;background:#b2b2b2"></div>
<div class="a" style="left:1165.1px;top:565.3px;width:3.5px;height:1px;background:#b2b2b2"></div>
<div class="a" style="left:1198.6px;top:565.3px;width:3.5px;height:1px;background:#b2b2b2"></div>
<div class="a" style="left:1165.1px;top:574.8px;width:3.5px;height:1px;background:#b2b2b2"></div>
<div class="a" style="left:1198.6px;top:574.8px;width:3.5px;height:1px;background:#b2b2b2"></div>
<div class="a" style="left:1165.1px;top:584.2px;width:3.5px;height:1px;background:#b2b2b2"></div>
<div class="a" style="left:1198.6px;top:584.2px;width:3.5px;height:1px;background:#b2b2b2"></div>
<div class="a" style="left:1165.1px;top:593.7px;width:3.5px;height:1px;background:#b2b2b2"></div>
<div class="a" style="left:1198.6px;top:593.7px;width:3.5px;height:1px;background:#b2b2b2"></div>
<div class="a" style="left:1165.1px;top:603.2px;width:3.5px;height:1px;background:#b2b2b2"></div>
<div class="a" style="left:1198.6px;top:603.2px;width:3.5px;height:1px;background:#b2b2b2"></div>
<div class="a" style="left:1165.1px;top:612.7px;width:3.5px;height:1px;background:#b2b2b2"></div>
<div class="a" style="left:1198.6px;top:612.7px;width:3.5px;height:1px;background:#b2b2b2"></div>
<div class="a" style="left:1165.1px;top:622.2px;width:3.5px;height:1px;background:#b2b2b2"></div>
<div class="a" style="left:1198.6px;top:622.2px;width:3.5px;height:1px;background:#b2b2b2"></div>
<div class="a" style="left:1165.1px;top:631.7px;width:3.5px;height:1px;background:#b2b2b2"></div>
<div class="a" style="left:1198.6px;top:631.7px;width:3.5px;height:1px;background:#b2b2b2"></div>
<div class="a" style="left:1165.1px;top:641.2px;width:3.5px;height:1px;background:#b2b2b2"></div>
<div class="a" style="left:1198.6px;top:641.2px;width:3.5px;height:1px;background:#b2b2b2"></div>
<div class="a" style="left:1165.1px;top:650.6px;width:3.5px;height:1px;background:#b2b2b2"></div>
<div class="a" style="left:1198.6px;top:650.6px;width:3.5px;height:1px;background:#b2b2b2"></div>
<div class="a" style="left:1165.1px;top:660.1px;width:3.5px;height:1px;background:#b2b2b2"></div>
<div class="a" style="left:1198.6px;top:660.1px;width:3.5px;height:1px;background:#b2b2b2"></div>
<div class="a" style="left:1165.1px;top:669.6px;width:3.5px;height:1px;background:#b2b2b2"></div>
<div class="a" style="left:1198.6px;top:669.6px;width:3.5px;height:1px;background:#b2b2b2"></div>
<div class="a" style="left:1163.6px;top:679.1px;width:5px;height:1px;background:#b2b2b2"></div>
<div class="a" style="left:1198.6px;top:679.1px;width:5px;height:1px;background:#b2b2b2"></div>
<div class="a" style="left:1170px;top:616.4px;width:26px;height:12.5px;background:#0078d7"></div>
<div class="t" style="left:1166px;top:705.81px;font-size:14.4px;letter-spacing:-0.45px">Offset</div>
<div class="a" style="left:1181px;top:739px;width:5px;height:148.7px;background:#e7eaea;border:1px solid #d6d6d6"></div>
<div class="a" style="left:1163.6px;top:745.1px;width:5px;height:1px;background:#b2b2b2"></div>
<div class="a" style="left:1198.6px;top:745.1px;width:5px;height:1px;background:#b2b2b2"></div>
<div class="a" style="left:1165.1px;top:754.1px;width:3.5px;height:1px;background:#b2b2b2"></div>
<div class="a" style="left:1198.6px;top:754.1px;width:3.5px;height:1px;background:#b2b2b2"></div>
<div class="a" style="left:1165.1px;top:763.1px;width:3.5px;height:1px;background:#b2b2b2"></div>
<div class="a" style="left:1198.6px;top:763.1px;width:3.5px;height:1px;background:#b2b2b2"></div>
<div class="a" style="left:1165.1px;top:772.1px;width:3.5px;height:1px;background:#b2b2b2"></div>
<div class="a" style="left:1198.6px;top:772.1px;width:3.5px;height:1px;background:#b2b2b2"></div>
<div class="a" style="left:1165.1px;top:781.2px;width:3.5px;height:1px;background:#b2b2b2"></div>
<div class="a" style="left:1198.6px;top:781.2px;width:3.5px;height:1px;background:#b2b2b2"></div>
<div class="a" style="left:1165.1px;top:790.2px;width:3.5px;height:1px;background:#b2b2b2"></div>
<div class="a" style="left:1198.6px;top:790.2px;width:3.5px;height:1px;background:#b2b2b2"></div>
<div class="a" style="left:1165.1px;top:799.2px;width:3.5px;height:1px;background:#b2b2b2"></div>
<div class="a" style="left:1198.6px;top:799.2px;width:3.5px;height:1px;background:#b2b2b2"></div>
<div class="a" style="left:1165.1px;top:808.2px;width:3.5px;height:1px;background:#b2b2b2"></div>
<div class="a" style="left:1198.6px;top:808.2px;width:3.5px;height:1px;background:#b2b2b2"></div>
<div class="a" style="left:1165.1px;top:817.2px;width:3.5px;height:1px;background:#b2b2b2"></div>
<div class="a" style="left:1198.6px;top:817.2px;width:3.5px;height:1px;background:#b2b2b2"></div>
<div class="a" style="left:1165.1px;top:826.2px;width:3.5px;height:1px;background:#b2b2b2"></div>
<div class="a" style="left:1198.6px;top:826.2px;width:3.5px;height:1px;background:#b2b2b2"></div>
<div class="a" style="left:1165.1px;top:835.2px;width:3.5px;height:1px;background:#b2b2b2"></div>
<div class="a" style="left:1198.6px;top:835.2px;width:3.5px;height:1px;background:#b2b2b2"></div>
<div class="a" style="left:1165.1px;top:844.2px;width:3.5px;height:1px;background:#b2b2b2"></div>
<div class="a" style="left:1198.6px;top:844.2px;width:3.5px;height:1px;background:#b2b2b2"></div>
<div class="a" style="left:1165.1px;top:853.3px;width:3.5px;height:1px;background:#b2b2b2"></div>
<div class="a" style="left:1198.6px;top:853.3px;width:3.5px;height:1px;background:#b2b2b2"></div>
<div class="a" style="left:1165.1px;top:862.3px;width:3.5px;height:1px;background:#b2b2b2"></div>
<div class="a" style="left:1198.6px;top:862.3px;width:3.5px;height:1px;background:#b2b2b2"></div>
<div class="a" style="left:1165.1px;top:871.3px;width:3.5px;height:1px;background:#b2b2b2"></div>
<div class="a" style="left:1198.6px;top:871.3px;width:3.5px;height:1px;background:#b2b2b2"></div>
<div class="a" style="left:1163.6px;top:880.3px;width:5px;height:1px;background:#b2b2b2"></div>
<div class="a" style="left:1198.6px;top:880.3px;width:5px;height:1px;background:#b2b2b2"></div>
<div class="a" style="left:1170px;top:874.2px;width:26px;height:12.5px;background:#0078d7"></div>
<div class="a" style="left:1227px;top:902px;width:2px;height:2px;background:#b8b8b8"></div>
<div class="a" style="left:1223px;top:906px;width:2px;height:2px;background:#b8b8b8"></div>
<div class="a" style="left:1227px;top:906px;width:2px;height:2px;background:#b8b8b8"></div>
<div class="a" style="left:1219px;top:910px;width:2px;height:2px;background:#b8b8b8"></div>
<div class="a" style="left:1223px;top:910px;width:2px;height:2px;background:#b8b8b8"></div>
<div class="a" style="left:1227px;top:910px;width:2px;height:2px;background:#b8b8b8"></div>
<div class="a" style="left:0;top:0;width:1232px;height:915px;border:1px solid #1a7ad3;pointer-events:none"></div>
</body></html>
